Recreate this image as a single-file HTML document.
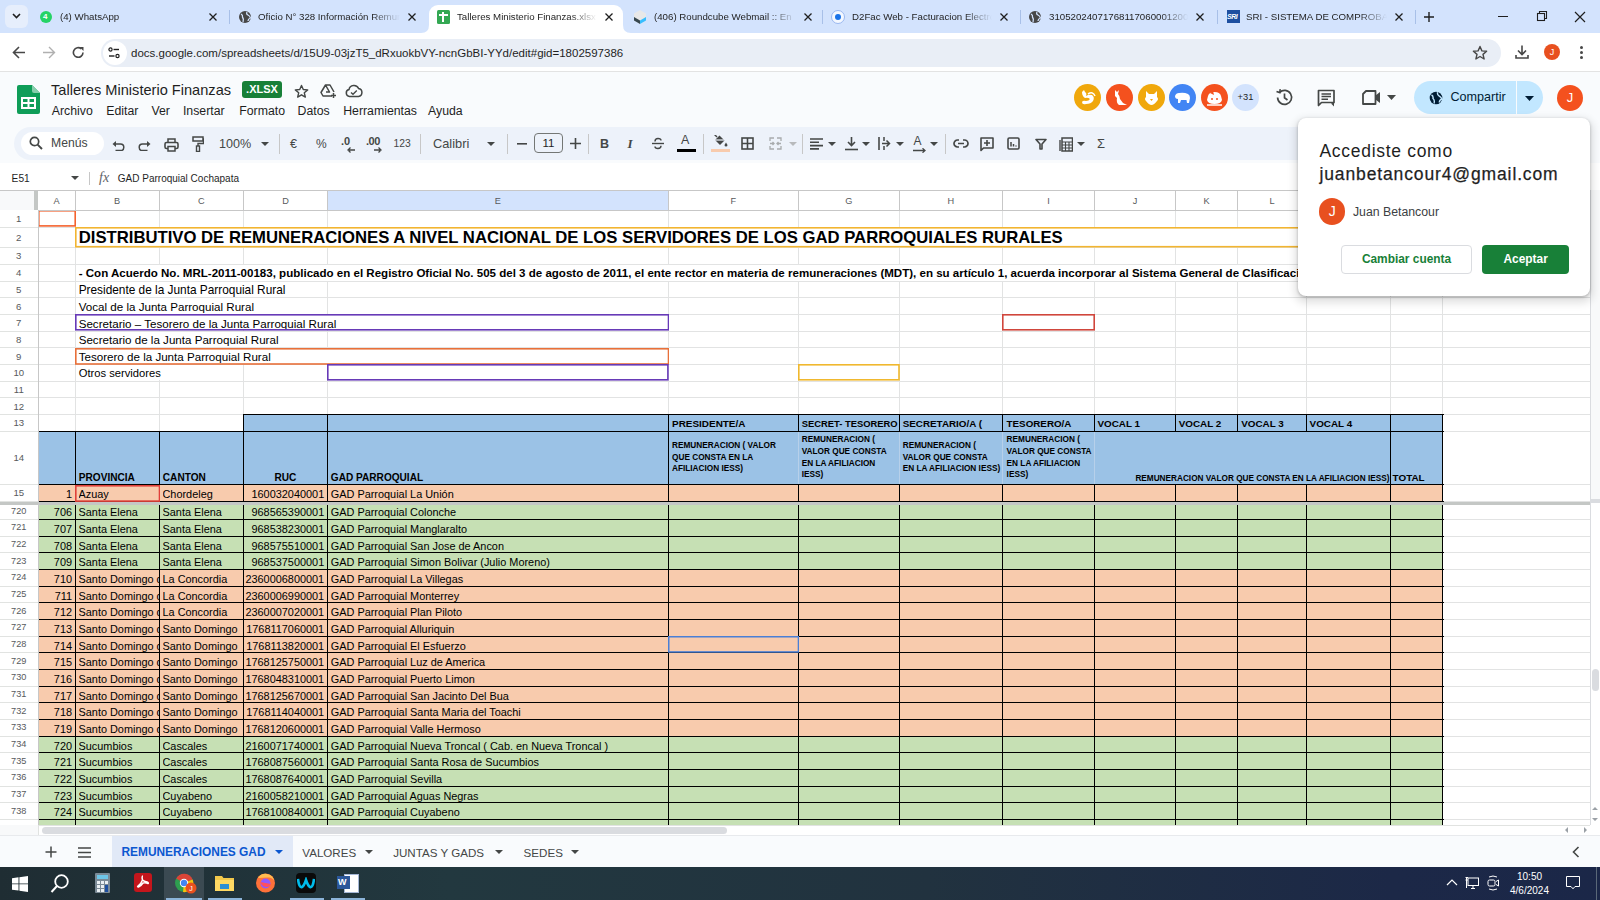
<!DOCTYPE html>
<html><head><meta charset="utf-8"><title>Talleres Ministerio Finanzas</title>
<style>html,body{margin:0;padding:0;width:1600px;height:900px;overflow:hidden;background:#fff;font-family:"Liberation Sans",sans-serif}</style>
</head><body>
<div style="position:absolute;left:0;top:0;width:1600px;height:33px;background:#d3e3fd"></div>
<div style="position:absolute;left:5px;top:5px;width:23px;height:23px;border-radius:6px;background:#e6eefc"></div>
<svg style="position:absolute;left:11px;top:12px" width="11" height="8" viewBox="0 0 11 8"><path d="M2 2 L5.5 5.5 L9 2" stroke="#1f1f1f" stroke-width="1.6" fill="none"/></svg>
<div style="position:absolute;left:429px;top:5px;width:194px;height:28px;background:#fff;border-radius:9px 9px 0 0"></div>
<svg style="position:absolute;left:421px;top:25px" width="8" height="8"><path d="M0 8 Q8 8 8 0 L8 8 Z" fill="#fff"/></svg>
<svg style="position:absolute;left:623px;top:25px" width="8" height="8"><path d="M8 8 Q0 8 0 0 L0 8 Z" fill="#fff"/></svg>
<div style="position:absolute;left:60px;top:9px;width:141px;height:16px;overflow:hidden;white-space:nowrap;font:9.7px/16px 'Liberation Sans',sans-serif;color:#1f1f1f;-webkit-mask-image:linear-gradient(90deg,#000 80%,transparent)">(4) WhatsApp</div>
<svg style="position:absolute;left:208px;top:12px" width="10" height="10" viewBox="0 0 10 10"><path d="M1.5 1.5 L8.5 8.5 M8.5 1.5 L1.5 8.5" stroke="#1f1f1f" stroke-width="1.3"/></svg>
<div style="position:absolute;left:40px;top:11px;width:12px;height:12px;border-radius:50%;background:#25d366"></div><div style="position:absolute;left:43px;top:11px;font:bold 8px/12px 'Liberation Sans';color:#fff">4</div>
<div style="position:absolute;left:258px;top:9px;width:142px;height:16px;overflow:hidden;white-space:nowrap;font:9.7px/16px 'Liberation Sans',sans-serif;color:#1f1f1f;-webkit-mask-image:linear-gradient(90deg,#000 80%,transparent)">Oficio N° 328 Información Remuneraciones</div>
<svg style="position:absolute;left:407px;top:12px" width="10" height="10" viewBox="0 0 10 10"><path d="M1.5 1.5 L8.5 8.5 M8.5 1.5 L1.5 8.5" stroke="#1f1f1f" stroke-width="1.3"/></svg>
<svg style="position:absolute;left:238px;top:10px" width="14" height="14" viewBox="0 0 14 14"><circle cx="7" cy="7" r="6" fill="#474747"/><path d="M3 4 Q5 5 4.5 7 Q6 9 5 12 M9 2 Q8 4 10 5 Q12 6 12.5 8 Q10 9 10 11" stroke="#d3e3fd" stroke-width="1.3" fill="none"/></svg>
<div style="position:absolute;left:457px;top:9px;width:140px;height:16px;overflow:hidden;white-space:nowrap;font:9.7px/16px 'Liberation Sans',sans-serif;color:#1f1f1f;-webkit-mask-image:linear-gradient(90deg,#000 80%,transparent)">Talleres Ministerio Finanzas.xlsx</div>
<svg style="position:absolute;left:604px;top:12px" width="10" height="10" viewBox="0 0 10 10"><path d="M1.5 1.5 L8.5 8.5 M8.5 1.5 L1.5 8.5" stroke="#1f1f1f" stroke-width="1.3"/></svg>
<div style="position:absolute;left:437px;top:10px;width:13px;height:14px;background:#34a853;border-radius:1.5px"></div><div style="position:absolute;left:442px;top:12px;width:2px;height:10px;background:#fff"></div><div style="position:absolute;left:439px;top:14px;width:9px;height:2px;background:#fff"></div>
<div style="position:absolute;left:654px;top:9px;width:142px;height:16px;overflow:hidden;white-space:nowrap;font:9.7px/16px 'Liberation Sans',sans-serif;color:#1f1f1f;-webkit-mask-image:linear-gradient(90deg,#000 80%,transparent)">(406) Roundcube Webmail :: En</div>
<svg style="position:absolute;left:803px;top:12px" width="10" height="10" viewBox="0 0 10 10"><path d="M1.5 1.5 L8.5 8.5 M8.5 1.5 L1.5 8.5" stroke="#1f1f1f" stroke-width="1.3"/></svg>
<svg style="position:absolute;left:633px;top:9px" width="14" height="16" viewBox="0 0 14 16"><path d="M7 1 L13 4.5 L13 11.5 L7 15 L1 11.5 L1 4.5 Z" fill="#e8e8e8"/><path d="M1 8 L7 11.5 L7 15 L1 11.5 Z" fill="#37474f"/><path d="M7 11.5 L13 8 L13 11.5 L7 15 Z" fill="#37beff"/></svg>
<div style="position:absolute;left:852px;top:9px;width:140px;height:16px;overflow:hidden;white-space:nowrap;font:9.7px/16px 'Liberation Sans',sans-serif;color:#1f1f1f;-webkit-mask-image:linear-gradient(90deg,#000 80%,transparent)">D2Fac Web - Facturacion Electronica</div>
<svg style="position:absolute;left:999px;top:12px" width="10" height="10" viewBox="0 0 10 10"><path d="M1.5 1.5 L8.5 8.5 M8.5 1.5 L1.5 8.5" stroke="#1f1f1f" stroke-width="1.3"/></svg>
<div style="position:absolute;left:831px;top:10px;width:12px;height:12px;border-radius:50%;border:1px solid #9ab8f0;background:#f4f8ff"></div><div style="position:absolute;left:835px;top:14px;width:6px;height:6px;border-radius:50%;background:#1a73e8"></div>
<div style="position:absolute;left:1049px;top:9px;width:139px;height:16px;overflow:hidden;white-space:nowrap;font:9.7px/16px 'Liberation Sans',sans-serif;color:#1f1f1f;-webkit-mask-image:linear-gradient(90deg,#000 80%,transparent)">310520240717681170600012000</div>
<svg style="position:absolute;left:1195px;top:12px" width="10" height="10" viewBox="0 0 10 10"><path d="M1.5 1.5 L8.5 8.5 M8.5 1.5 L1.5 8.5" stroke="#1f1f1f" stroke-width="1.3"/></svg>
<svg style="position:absolute;left:1028px;top:10px" width="14" height="14" viewBox="0 0 14 14"><circle cx="7" cy="7" r="6" fill="#474747"/><path d="M3 4 Q5 5 4.5 7 Q6 9 5 12 M9 2 Q8 4 10 5 Q12 6 12.5 8 Q10 9 10 11" stroke="#d3e3fd" stroke-width="1.3" fill="none"/></svg>
<div style="position:absolute;left:1246px;top:9px;width:141px;height:16px;overflow:hidden;white-space:nowrap;font:9.7px/16px 'Liberation Sans',sans-serif;color:#1f1f1f;-webkit-mask-image:linear-gradient(90deg,#000 80%,transparent)">SRI - SISTEMA DE COMPROBANTES</div>
<svg style="position:absolute;left:1394px;top:12px" width="10" height="10" viewBox="0 0 10 10"><path d="M1.5 1.5 L8.5 8.5 M8.5 1.5 L1.5 8.5" stroke="#1f1f1f" stroke-width="1.3"/></svg>
<div style="position:absolute;left:1227px;top:10px;width:13px;height:13px;background:#1d4fa0"></div><div style="position:absolute;left:1227px;top:11px;font:italic bold 7px/11px 'Liberation Sans';color:#fff;letter-spacing:-0.5px">SRI</div>
<div style="position:absolute;left:229px;top:10px;width:1px;height:14px;background:#a8c0e8"></div>
<div style="position:absolute;left:822px;top:10px;width:1px;height:14px;background:#a8c0e8"></div>
<div style="position:absolute;left:1020px;top:10px;width:1px;height:14px;background:#a8c0e8"></div>
<div style="position:absolute;left:1217px;top:10px;width:1px;height:14px;background:#a8c0e8"></div>
<div style="position:absolute;left:1415px;top:10px;width:1px;height:14px;background:#a8c0e8"></div>
<svg style="position:absolute;left:1423px;top:11px" width="12" height="12"><path d="M6 1 V11 M1 6 H11" stroke="#1f1f1f" stroke-width="1.4"/></svg>
<div style="position:absolute;left:1498px;top:16px;width:10px;height:1px;background:#1f1f1f"></div>
<svg style="position:absolute;left:1536px;top:10px" width="12" height="12"><rect x="1.5" y="3.5" width="7" height="7" fill="none" stroke="#1f1f1f" stroke-width="1.1"/><path d="M3.5 3.5 V1.5 H10.5 V8.5 H8.5" fill="none" stroke="#1f1f1f" stroke-width="1.1"/></svg>
<svg style="position:absolute;left:1574px;top:11px" width="12" height="12"><path d="M1 1 L11 11 M11 1 L1 11" stroke="#1f1f1f" stroke-width="1.2"/></svg>
<div style="position:absolute;left:0;top:33px;width:1600px;height:38px;background:#fff;border-bottom:1px solid #e3e3e3;border-radius:5px 8px 0 0"></div>
<svg style="position:absolute;left:12px;top:46px" width="14" height="13" viewBox="0 0 14 13"><path d="M13 6.5 H2 M7 1 L1.5 6.5 L7 12" stroke="#474747" stroke-width="1.6" fill="none"/></svg>
<svg style="position:absolute;left:42px;top:46px" width="14" height="13" viewBox="0 0 14 13"><path d="M1 6.5 H12 M7 1 L12.5 6.5 L7 12" stroke="#b0b0b0" stroke-width="1.4" fill="none"/></svg>
<svg style="position:absolute;left:72px;top:46px" width="13" height="13" viewBox="0 0 13 13"><path d="M11 6.5 A4.8 4.8 0 1 1 9.3 2.8" stroke="#474747" stroke-width="1.6" fill="none"/><path d="M7.5 1 H11.5 V5 Z" fill="#474747"/></svg>
<div style="position:absolute;left:101px;top:39px;width:1400px;height:28px;border-radius:14px;background:#e9eef6"></div>
<div style="position:absolute;left:103px;top:41px;width:24px;height:24px;border-radius:12px;background:#fff"></div>
<svg style="position:absolute;left:108px;top:47px" width="12" height="12" viewBox="0 0 12 12"><circle cx="2.5" cy="2.5" r="1.6" fill="none" stroke="#1f1f1f" stroke-width="1.2"/><path d="M5.5 2.5 H11" stroke="#1f1f1f" stroke-width="1.4"/><circle cx="9.5" cy="9" r="1.6" fill="none" stroke="#1f1f1f" stroke-width="1.2"/><path d="M1 9 H6.5" stroke="#1f1f1f" stroke-width="1.4"/></svg>
<div style="position:absolute;left:131px;top:44px;font:11.5px/18px 'Liberation Sans',sans-serif;color:#1f1f1f;white-space:nowrap">docs.google.com/spreadsheets/d/15U9-03jzT5_dRxuokbVY-ncnGbBI-YYd/edit#gid=1802597386</div>
<svg style="position:absolute;left:1472px;top:45px" width="16" height="16" viewBox="0 0 16 16"><path d="M8 1.5 L9.9 5.9 L14.6 6.3 L11 9.4 L12.1 14 L8 11.5 L3.9 14 L5 9.4 L1.4 6.3 L6.1 5.9 Z" fill="none" stroke="#474747" stroke-width="1.4" stroke-linejoin="round"/></svg>
<svg style="position:absolute;left:1514px;top:44px" width="16" height="16" viewBox="0 0 16 16"><path d="M8 1.5 V10 M4 6.5 L8 10.5 L12 6.5 M2 11 V14 H14 V11" stroke="#474747" stroke-width="1.6" fill="none"/></svg>
<div style="position:absolute;left:1544px;top:44px;width:16px;height:16px;border-radius:50%;background:#e8501f;color:#fff;font:9px/16px 'Liberation Sans';text-align:center">J</div>
<div style="position:absolute;left:1580px;top:46px;width:3px;height:3px;border-radius:50%;background:#474747"></div>
<div style="position:absolute;left:1580px;top:51px;width:3px;height:3px;border-radius:50%;background:#474747"></div>
<div style="position:absolute;left:1580px;top:56px;width:3px;height:3px;border-radius:50%;background:#474747"></div>
<div style="position:absolute;left:0;top:72px;width:1600px;height:91px;background:#f9fbfd"></div>
<svg style="position:absolute;left:17px;top:85px" width="23" height="29" viewBox="0 0 23 29"><path d="M2 0 H15 L23 8 V27 A2 2 0 0 1 21 29 H2 A2 2 0 0 1 0 27 V2 A2 2 0 0 1 2 0 Z" fill="#0f9d58"/><path d="M15 0 V6 A2 2 0 0 0 17 8 H23 Z" fill="#87ceac"/><rect x="5" y="13" width="13" height="10" fill="none" stroke="#fff" stroke-width="2"/><path d="M5 18 H18 M11.5 13 V23" stroke="#fff" stroke-width="2"/></svg>
<div style="position:absolute;left:51px;top:80px;font:14.6px/20px 'Liberation Sans',sans-serif;color:#1f1f1f;white-space:nowrap">Talleres Ministerio Finanzas</div>
<div style="position:absolute;left:242px;top:81px;width:40px;height:17px;border-radius:3px;background:#188038;color:#fff;font:bold 11px/17px 'Liberation Sans',sans-serif;text-align:center">.XLSX</div>
<svg style="position:absolute;left:294px;top:84px" width="15" height="15" viewBox="0 0 16 16"><path d="M8 1.5 L9.9 5.9 L14.6 6.3 L11 9.4 L12.1 14 L8 11.5 L3.9 14 L5 9.4 L1.4 6.3 L6.1 5.9 Z" fill="none" stroke="#444746" stroke-width="1.5" stroke-linejoin="round"/></svg>
<svg style="position:absolute;left:320px;top:83px" width="17" height="16" viewBox="0 0 17 16"><path d="M5.5 2 H10 L14 9 M12 13 H3 L1 9.5 L5.5 2 L9.5 9 H6" fill="none" stroke="#444746" stroke-width="1.5" stroke-linejoin="round"/><path d="M13.5 10 V15 M11 12.5 H16" stroke="#444746" stroke-width="1.5"/></svg>
<svg style="position:absolute;left:345px;top:84px" width="18" height="14" viewBox="0 0 18 14"><path d="M4.5 12.5 A3.5 3.5 0 0 1 4 5.6 A5 5 0 0 1 13.6 4.6 A4 4 0 0 1 13.5 12.5 Z" fill="none" stroke="#444746" stroke-width="1.5"/><path d="M6 8.5 L8 10.3 L11.8 6.6" fill="none" stroke="#444746" stroke-width="1.4"/></svg>
<div style="position:absolute;left:51.8px;top:103px;font:12.3px/16px 'Liberation Sans',sans-serif;color:#1f1f1f;white-space:nowrap">Archivo</div>
<div style="position:absolute;left:106.2px;top:103px;font:12.3px/16px 'Liberation Sans',sans-serif;color:#1f1f1f;white-space:nowrap">Editar</div>
<div style="position:absolute;left:151.5px;top:103px;font:12.3px/16px 'Liberation Sans',sans-serif;color:#1f1f1f;white-space:nowrap">Ver</div>
<div style="position:absolute;left:182.9px;top:103px;font:12.3px/16px 'Liberation Sans',sans-serif;color:#1f1f1f;white-space:nowrap">Insertar</div>
<div style="position:absolute;left:239.2px;top:103px;font:12.3px/16px 'Liberation Sans',sans-serif;color:#1f1f1f;white-space:nowrap">Formato</div>
<div style="position:absolute;left:297.6px;top:103px;font:12.3px/16px 'Liberation Sans',sans-serif;color:#1f1f1f;white-space:nowrap">Datos</div>
<div style="position:absolute;left:343.2px;top:103px;font:12.3px/16px 'Liberation Sans',sans-serif;color:#1f1f1f;white-space:nowrap">Herramientas</div>
<div style="position:absolute;left:428px;top:103px;font:12.3px/16px 'Liberation Sans',sans-serif;color:#1f1f1f;white-space:nowrap">Ayuda</div>
<svg style="position:absolute;left:1074.0px;top:84px" width="27" height="27" viewBox="0 0 27 27"><circle cx="13.5" cy="13.5" r="13.5" fill="#f0a80c"/><path d="M8 8 L10 6 L11 8 Q13 9 12 12 Q15 10 18 11 Q21 13 19 17 Q17 20 12 20 Q8 21 8 18 Q9 16 12 17 Q15 17 16 15 Q14 13 11 14 Q8 12 8 8 Z" fill="#fff"/><path d="M14 10 Q19 7 21 12" fill="none" stroke="#fff" stroke-width="1.5"/></svg>
<svg style="position:absolute;left:1105.5px;top:84px" width="27" height="27" viewBox="0 0 27 27"><circle cx="13.5" cy="13.5" r="13.5" fill="#f4511e"/><path d="M9 6 L11 8 L13 6 L12 10 Q14 12 14 15 L17 19 L21 21 L13 21 Q10 19 11 14 L9 12 Z" fill="#fff"/></svg>
<svg style="position:absolute;left:1137.5px;top:84px" width="27" height="27" viewBox="0 0 27 27"><circle cx="13.5" cy="13.5" r="13.5" fill="#f0a80c"/><path d="M8 7 L11 10 H16 L19 7 L19 13 Q21 15 19 17 Q16 21 13.5 21 Q11 21 8 17 Q6 15 8 13 Z" fill="#fff"/><path d="M12 15 L13.5 17 L15 15 Z" fill="#f0a80c"/></svg>
<svg style="position:absolute;left:1168.8px;top:84px" width="27" height="27" viewBox="0 0 27 27"><circle cx="13.5" cy="13.5" r="13.5" fill="#4285f4"/><path d="M6 12 Q7 9 10 9 Q15 8 19 10 Q21 11 21 14 L20 19 L18 19 L17.5 16 L12 16 L11 19 L9 19 L9 15 Q6 15 6 12 Z" fill="#fff"/></svg>
<svg style="position:absolute;left:1200.8px;top:84px" width="27" height="27" viewBox="0 0 27 27"><circle cx="13.5" cy="13.5" r="13.5" fill="#f4511e"/><path d="M7 12 Q8 8 13.5 8 Q19 8 20 12 L21 16 Q20 20 13.5 20 Q7 20 6 16 Z" fill="#fff"/><path d="M9 9 L12 7 L13 11 Z" fill="#f4511e"/><circle cx="11" cy="15" r="1" fill="#f4511e"/><circle cx="16" cy="15" r="1" fill="#f4511e"/><path d="M6 21 H21" stroke="#fff" stroke-width="1.5"/></svg>
<div style="position:absolute;left:1232px;top:84px;width:27px;height:27px;border-radius:50%;background:#d3e3fd;color:#1f1f1f;font:9.3px/27px 'Liberation Sans',sans-serif;text-align:center">+31</div>
<svg style="position:absolute;left:1275px;top:88px" width="19" height="19" viewBox="0 0 19 19"><path d="M2.6 9.5 A7 7 0 1 0 4.6 4.5" fill="none" stroke="#444746" stroke-width="1.7"/><path d="M1.5 3.5 L4.8 4.6 L5.2 1.2" fill="none" stroke="#444746" stroke-width="1.6"/><path d="M9.5 5.5 V9.8 L12.5 12" fill="none" stroke="#444746" stroke-width="1.7"/></svg>
<svg style="position:absolute;left:1317px;top:89px" width="19" height="19" viewBox="0 0 19 19"><path d="M1.5 1.5 H17 V13.5 H4.5 L1.5 16.5 Z" fill="none" stroke="#444746" stroke-width="1.7" stroke-linejoin="round"/><path d="M4.5 5 H14 M4.5 7.6 H14 M4.5 10.2 H11" stroke="#444746" stroke-width="1.5"/><path d="M17 13.5 V17.5 L14 14.5" fill="#444746"/></svg>
<svg style="position:absolute;left:1362px;top:90px" width="20" height="15" viewBox="0 0 20 15"><path d="M4 1 H13.5 V14 H1 V4 Z" fill="none" stroke="#444746" stroke-width="1.8" stroke-linejoin="round"/><path d="M13.5 5.5 L18 2 V13 L13.5 9.5 Z" fill="#444746"/></svg>
<svg style="position:absolute;left:1387px;top:95px" width="9" height="5"><path d="M0 0 H9 L4.5 5 Z" fill="#444746"/></svg>
<div style="position:absolute;left:1414px;top:81px;width:129px;height:33px;border-radius:17px;background:#c2e7ff"></div>
<div style="position:absolute;left:1515.5px;top:81px;width:1px;height:33px;background:#f9fbfd"></div>
<svg style="position:absolute;left:1429px;top:91px" width="14" height="14" viewBox="0 0 14 14"><circle cx="7" cy="7" r="6.3" fill="#001d35"/><path d="M2.5 4 Q4.5 5 4 7.5 Q6 9 5 12.5 M8.6 1.2 Q8 3.5 10 4.8 Q12 6 13 8 Q10.5 8.6 10.3 11.5" stroke="#c2e7ff" stroke-width="1.4" fill="none"/></svg>
<div style="position:absolute;left:1450.5px;top:89px;font:12.6px/17px 'Liberation Sans',sans-serif;color:#001d35;white-space:nowrap">Compartir</div>
<svg style="position:absolute;left:1525px;top:95.5px" width="9" height="5"><path d="M0 0 H9 L4.5 5 Z" fill="#001d35"/></svg>
<div style="position:absolute;left:1557px;top:85px;width:26px;height:26px;border-radius:50%;background:#f4511e;color:#fff;font:13px/26px 'Liberation Sans',sans-serif;text-align:center">J</div>
<div style="position:absolute;left:14px;top:127px;width:1576px;height:33px;border-radius:17px;background:#edf2fa"></div>
<div style="position:absolute;left:21px;top:131.5px;width:83px;height:23.5px;border-radius:12px;background:#fff"></div>
<svg style="position:absolute;left:28.6px;top:136.0px" width="14" height="14" viewBox="0 0 14 14"><circle cx="5.5" cy="5.5" r="4.2" fill="none" stroke="#444746" stroke-width="1.7"/><path d="M8.6 8.6 L13 13" stroke="#444746" stroke-width="1.9"/></svg>
<div style="position:absolute;left:51px;top:135px;font:12.2px/16px 'Liberation Sans',sans-serif;color:#444746;white-space:nowrap">Menús</div>
<svg style="position:absolute;left:112.0px;top:139.5px" width="13" height="11" viewBox="0 0 13 11"><path d="M3 4 H8.5 A3.3 3.3 0 0 1 8.5 10.6 H3.5" fill="none" stroke="#444746" stroke-width="1.5"/><path d="M0.5 4 L4 1 V7 Z" fill="#444746"/></svg>
<svg style="position:absolute;left:138.0px;top:139.5px" width="13" height="11" viewBox="0 0 13 11"><path d="M10 4 H4.5 A3.3 3.3 0 0 0 4.5 10.6 H9.5" fill="none" stroke="#444746" stroke-width="1.5"/><path d="M12.5 4 L9 1 V7 Z" fill="#444746"/></svg>
<svg style="position:absolute;left:164.0px;top:137.5px" width="15" height="14" viewBox="0 0 15 14"><path d="M4 4 V1 H11 V4" fill="none" stroke="#444746" stroke-width="1.5"/><rect x="1" y="4.5" width="13" height="6" rx="1.5" fill="none" stroke="#444746" stroke-width="1.6"/><rect x="4" y="8.5" width="7" height="4.5" fill="#edf2fa" stroke="#444746" stroke-width="1.5"/></svg>
<svg style="position:absolute;left:191.5px;top:136.0px" width="12" height="16" viewBox="0 0 12 16"><rect x="1" y="1" width="10" height="4" fill="none" stroke="#444746" stroke-width="1.5"/><path d="M11 3 H11.5 V7.5 H6 V10" fill="none" stroke="#444746" stroke-width="1.4"/><rect x="4.5" y="10" width="3" height="5.5" fill="none" stroke="#444746" stroke-width="1.4"/></svg>
<div style="position:absolute;left:219px;top:136px;font:12.6px/16px 'Liberation Sans',sans-serif;color:#444746">100%</div>
<svg style="position:absolute;left:260.5px;top:142.0px" width="8" height="4" viewBox="0 0 8 4"><path d="M0 0 H8 L4 4 Z" fill="#444746"/></svg>
<div style="position:absolute;left:278.7px;top:134px;width:1px;height:20px;background:#c7c7c7"></div>
<div style="position:absolute;left:419.5px;top:134px;width:1px;height:20px;background:#c7c7c7"></div>
<div style="position:absolute;left:507.4px;top:134px;width:1px;height:20px;background:#c7c7c7"></div>
<div style="position:absolute;left:588.4px;top:134px;width:1px;height:20px;background:#c7c7c7"></div>
<div style="position:absolute;left:702.7px;top:134px;width:1px;height:20px;background:#c7c7c7"></div>
<div style="position:absolute;left:802px;top:134px;width:1px;height:20px;background:#c7c7c7"></div>
<div style="position:absolute;left:944.8px;top:134px;width:1px;height:20px;background:#c7c7c7"></div>
<div style="position:absolute;left:290px;top:136px;font:12.5px/16px 'Liberation Sans',sans-serif;color:#444746">€</div>
<div style="position:absolute;left:316px;top:136px;font:12px/16px 'Liberation Sans',sans-serif;color:#444746">%</div>
<div style="position:absolute;left:341px;top:134px;font:bold 11px/14px 'Liberation Sans',sans-serif;color:#444746">.0</div>
<svg style="position:absolute;left:347.0px;top:146.5px" width="8" height="6" viewBox="0 0 8 6"><path d="M8 3 H2 M3.5 0.5 L1 3 L3.5 5.5" stroke="#444746" stroke-width="1.3" fill="none"/></svg>
<div style="position:absolute;left:366px;top:134px;font:bold 11px/14px 'Liberation Sans',sans-serif;color:#444746;letter-spacing:-0.5px">.00</div>
<svg style="position:absolute;left:374.0px;top:146.5px" width="8" height="6" viewBox="0 0 8 6"><path d="M0 3 H6 M4.5 0.5 L7 3 L4.5 5.5" stroke="#444746" stroke-width="1.3" fill="none"/></svg>
<div style="position:absolute;left:393.5px;top:137px;font:10.3px/14px 'Liberation Sans',sans-serif;color:#444746">123</div>
<div style="position:absolute;left:433px;top:135.5px;font:12.8px/16px 'Liberation Sans',sans-serif;color:#444746">Calibri</div>
<svg style="position:absolute;left:487.4px;top:142.0px" width="8" height="4" viewBox="0 0 8 4"><path d="M0 0 H8 L4 4 Z" fill="#444746"/></svg>
<svg style="position:absolute;left:516.6px;top:142.5px" width="10" height="2" viewBox="0 0 10 2"><rect width="10" height="1.6" fill="#444746"/></svg>
<div style="position:absolute;left:534.3px;top:133.3px;width:28.5px;height:19.7px;box-sizing:border-box;border:1px solid #747775;border-radius:4px"></div>
<div style="position:absolute;left:534.3px;top:136px;width:28.5px;text-align:center;font:11.5px/15px 'Liberation Sans',sans-serif;color:#1f1f1f">11</div>
<svg style="position:absolute;left:569.8px;top:138.0px" width="11" height="11" viewBox="0 0 11 11"><path d="M5.5 0 V11 M0 5.5 H11" stroke="#444746" stroke-width="1.6"/></svg>
<div style="position:absolute;left:600px;top:136px;font:bold 12.5px/16px 'Liberation Sans',sans-serif;color:#444746">B</div>
<div style="position:absolute;left:627.5px;top:136px;font:italic bold 13px/16px 'Liberation Serif',serif;color:#444746">I</div>
<svg style="position:absolute;left:651.3px;top:137.0px" width="14" height="13" viewBox="0 0 14 13"><path d="M1 6.5 H13" stroke="#444746" stroke-width="1.4"/><path d="M4 4.5 Q4 1.5 7 1.5 Q10 1.5 10 3.5 M10 8.8 Q10 11.5 7 11.5 Q4 11.5 4 9.5" stroke="#444746" stroke-width="1.4" fill="none"/></svg>
<div style="position:absolute;left:681px;top:133px;font:12.5px/14px 'Liberation Sans',sans-serif;color:#444746">A</div>
<div style="position:absolute;left:677px;top:148.5px;width:19px;height:3px;background:#000"></div>
<svg style="position:absolute;left:712.0px;top:134.5px" width="16" height="13" viewBox="0 0 16 13"><path d="M3 5 L7.5 0.5 L12.5 5.5 L8 10 Z" fill="#444746"/><path d="M3 5 H12.5" stroke="#edf2fa" stroke-width="1.2"/><path d="M5 2 L2.5 -0.5" stroke="#444746" stroke-width="1.4"/><path d="M14 7.5 L15.5 10 A1.5 1.5 0 0 1 12.5 10 Z" fill="#444746"/></svg>
<div style="position:absolute;left:711px;top:148.5px;width:19px;height:3px;background:#f8cbad"></div>
<svg style="position:absolute;left:741.2px;top:137.0px" width="13" height="13" viewBox="0 0 13 13"><rect x="1" y="1" width="11" height="11" fill="none" stroke="#444746" stroke-width="1.6"/><path d="M6.5 1 V12 M1 6.5 H12" stroke="#444746" stroke-width="1.6"/></svg>
<svg style="position:absolute;left:768.9px;top:137.0px" width="13" height="13" viewBox="0 0 13 13"><path d="M1 4 V1 H5 M8 1 H12 V4 M12 9 V12 H8 M5 12 H1 V9 M1 6.5 H4.5 M8.5 6.5 H12 M3.5 5 L5 6.5 L3.5 8 M9.5 5 L8 6.5 L9.5 8" fill="none" stroke="#a8abad" stroke-width="1.3"/></svg>
<svg style="position:absolute;left:789.0px;top:142.0px" width="8" height="4" viewBox="0 0 8 4"><path d="M0 0 H8 L4 4 Z" fill="#b8babc"/></svg>
<svg style="position:absolute;left:810.3px;top:137.5px" width="13" height="12" viewBox="0 0 13 12"><path d="M0 1 H13 M0 4.3 H9 M0 7.6 H13 M0 10.9 H9" stroke="#444746" stroke-width="1.6"/></svg>
<svg style="position:absolute;left:827.8px;top:142.0px" width="8" height="4" viewBox="0 0 8 4"><path d="M0 0 H8 L4 4 Z" fill="#444746"/></svg>
<svg style="position:absolute;left:844.5px;top:136.5px" width="13" height="14" viewBox="0 0 13 14"><path d="M6.5 0 V8 M3 5 L6.5 8.5 L10 5" fill="none" stroke="#444746" stroke-width="1.6"/><path d="M0 12.5 H13" stroke="#444746" stroke-width="1.6"/></svg>
<svg style="position:absolute;left:862.0px;top:142.0px" width="8" height="4" viewBox="0 0 8 4"><path d="M0 0 H8 L4 4 Z" fill="#444746"/></svg>
<svg style="position:absolute;left:878.1px;top:137.0px" width="13" height="13" viewBox="0 0 13 13"><path d="M1 0 V13" stroke="#444746" stroke-width="1.6"/><path d="M4 6.5 H11 M8.5 3.5 L11.5 6.5 L8.5 9.5 M6 0 V4 M6 9 V13" fill="none" stroke="#444746" stroke-width="1.5"/></svg>
<svg style="position:absolute;left:895.7px;top:142.0px" width="8" height="4" viewBox="0 0 8 4"><path d="M0 0 H8 L4 4 Z" fill="#444746"/></svg>
<div style="position:absolute;left:913.5px;top:134px;font:12px/14px 'Liberation Sans',sans-serif;color:#444746">A</div>
<svg style="position:absolute;left:913.0px;top:148.0px" width="14" height="5" viewBox="0 0 14 5"><path d="M0 2.5 H12 M9.5 0.3 L12 2.5 L9.5 4.7" fill="none" stroke="#444746" stroke-width="1.3"/></svg>
<svg style="position:absolute;left:930.3px;top:142.0px" width="8" height="4" viewBox="0 0 8 4"><path d="M0 0 H8 L4 4 Z" fill="#444746"/></svg>
<svg style="position:absolute;left:952.5px;top:139.0px" width="16" height="9" viewBox="0 0 16 9"><path d="M6 1 H4.5 A3.5 3.5 0 0 0 4.5 8 H6 M10 1 H11.5 A3.5 3.5 0 0 1 11.5 8 H10 M5 4.5 H11" fill="none" stroke="#444746" stroke-width="1.7"/></svg>
<svg style="position:absolute;left:980.4px;top:136.5px" width="14" height="15" viewBox="0 0 14 15"><path d="M1 1 H13 V11 H3.5 L1 13.5 Z" fill="none" stroke="#444746" stroke-width="1.6" stroke-linejoin="round"/><path d="M7 3 V9 M4 6 H10" stroke="#444746" stroke-width="1.6"/></svg>
<svg style="position:absolute;left:1007.1px;top:137.0px" width="13" height="13" viewBox="0 0 13 13"><rect x="1" y="1" width="11" height="11" rx="1.2" fill="none" stroke="#444746" stroke-width="1.6"/><path d="M4 5 V9.5 M6.5 7 V9.5 M9 8.5 V9.5" stroke="#444746" stroke-width="1.5"/></svg>
<svg style="position:absolute;left:1034.6px;top:137.5px" width="12" height="12" viewBox="0 0 12 12"><path d="M1 1.5 H11 L7 6 V11 H5 V6 Z" fill="none" stroke="#444746" stroke-width="1.6" stroke-linejoin="round"/></svg>
<svg style="position:absolute;left:1058.9px;top:136.5px" width="14" height="15" viewBox="0 0 14 15"><path d="M1 3 V14" stroke="#444746" stroke-width="1.4"/><rect x="3" y="1" width="10.5" height="13" fill="none" stroke="#444746" stroke-width="1.5"/><path d="M3 5 H13.5 M3 8 H13.5 M3 11 H13.5 M6.5 5 V14 M10 5 V14" stroke="#444746" stroke-width="1.1"/></svg>
<svg style="position:absolute;left:1076.7px;top:142.0px" width="8" height="4" viewBox="0 0 8 4"><path d="M0 0 H8 L4 4 Z" fill="#444746"/></svg>
<div style="position:absolute;left:1097px;top:135.5px;font:13px/16px 'Liberation Sans',sans-serif;color:#444746">Σ</div>
<div style="position:absolute;left:0;top:163px;width:1600px;height:27px;background:#fff"></div>
<div style="position:absolute;left:11.6px;top:171px;font:10.2px/15px 'Liberation Sans',sans-serif;color:#1f1f1f">E51</div>
<svg style="position:absolute;left:71.0px;top:175.5px" width="8" height="4" viewBox="0 0 8 4"><path d="M0 0 H8 L4 4 Z" fill="#444746"/></svg>
<div style="position:absolute;left:88.5px;top:172px;width:1px;height:13px;background:#c7c7c7"></div>
<div style="position:absolute;left:99px;top:170px;font:italic 14px/16px 'Liberation Serif',serif;color:#5f6368">fx</div>
<div style="position:absolute;left:117.8px;top:171px;font:10px/15px 'Liberation Sans',sans-serif;color:#1f1f1f">GAD Parroquial Cochapata</div>
<div style="position:absolute;left:0.00px;top:190.30px;width:1600.00px;height:634.40px;background:#fff"></div>
<div style="position:absolute;left:75px;top:210px;width:1px;height:615px;background:#e2e3e3"></div>
<div style="position:absolute;left:159px;top:210px;width:1px;height:615px;background:#e2e3e3"></div>
<div style="position:absolute;left:243px;top:210px;width:1px;height:615px;background:#e2e3e3"></div>
<div style="position:absolute;left:327px;top:210px;width:1px;height:615px;background:#e2e3e3"></div>
<div style="position:absolute;left:668px;top:210px;width:1px;height:615px;background:#e2e3e3"></div>
<div style="position:absolute;left:798px;top:210px;width:1px;height:615px;background:#e2e3e3"></div>
<div style="position:absolute;left:899px;top:210px;width:1px;height:615px;background:#e2e3e3"></div>
<div style="position:absolute;left:1002px;top:210px;width:1px;height:615px;background:#e2e3e3"></div>
<div style="position:absolute;left:1094px;top:210px;width:1px;height:615px;background:#e2e3e3"></div>
<div style="position:absolute;left:1175px;top:210px;width:1px;height:615px;background:#e2e3e3"></div>
<div style="position:absolute;left:1237px;top:210px;width:1px;height:615px;background:#e2e3e3"></div>
<div style="position:absolute;left:1306px;top:210px;width:1px;height:615px;background:#e2e3e3"></div>
<div style="position:absolute;left:1390px;top:210px;width:1px;height:615px;background:#e2e3e3"></div>
<div style="position:absolute;left:1442px;top:210px;width:1px;height:615px;background:#e2e3e3"></div>
<div style="position:absolute;left:1590px;top:210px;width:1px;height:615px;background:#e2e3e3"></div>
<div style="position:absolute;left:38px;top:227px;width:1552px;height:1px;background:#e2e3e3"></div>
<div style="position:absolute;left:38px;top:247px;width:1552px;height:1px;background:#e2e3e3"></div>
<div style="position:absolute;left:38px;top:264px;width:1552px;height:1px;background:#e2e3e3"></div>
<div style="position:absolute;left:38px;top:281px;width:1552px;height:1px;background:#e2e3e3"></div>
<div style="position:absolute;left:38px;top:297px;width:1552px;height:1px;background:#e2e3e3"></div>
<div style="position:absolute;left:38px;top:314px;width:1552px;height:1px;background:#e2e3e3"></div>
<div style="position:absolute;left:38px;top:331px;width:1552px;height:1px;background:#e2e3e3"></div>
<div style="position:absolute;left:38px;top:347px;width:1552px;height:1px;background:#e2e3e3"></div>
<div style="position:absolute;left:38px;top:364px;width:1552px;height:1px;background:#e2e3e3"></div>
<div style="position:absolute;left:38px;top:381px;width:1552px;height:1px;background:#e2e3e3"></div>
<div style="position:absolute;left:38px;top:397px;width:1552px;height:1px;background:#e2e3e3"></div>
<div style="position:absolute;left:38px;top:414px;width:1552px;height:1px;background:#e2e3e3"></div>
<div style="position:absolute;left:38px;top:431px;width:1552px;height:1px;background:#e2e3e3"></div>
<div style="position:absolute;left:38px;top:484px;width:1552px;height:1px;background:#e2e3e3"></div>
<div style="position:absolute;left:38px;top:501px;width:1552px;height:1px;background:#e2e3e3"></div>
<div style="position:absolute;left:38px;top:519px;width:1552px;height:1px;background:#e2e3e3"></div>
<div style="position:absolute;left:38px;top:536px;width:1552px;height:1px;background:#e2e3e3"></div>
<div style="position:absolute;left:38px;top:552px;width:1552px;height:1px;background:#e2e3e3"></div>
<div style="position:absolute;left:38px;top:569px;width:1552px;height:1px;background:#e2e3e3"></div>
<div style="position:absolute;left:38px;top:586px;width:1552px;height:1px;background:#e2e3e3"></div>
<div style="position:absolute;left:38px;top:602px;width:1552px;height:1px;background:#e2e3e3"></div>
<div style="position:absolute;left:38px;top:619px;width:1552px;height:1px;background:#e2e3e3"></div>
<div style="position:absolute;left:38px;top:636px;width:1552px;height:1px;background:#e2e3e3"></div>
<div style="position:absolute;left:38px;top:652px;width:1552px;height:1px;background:#e2e3e3"></div>
<div style="position:absolute;left:38px;top:669px;width:1552px;height:1px;background:#e2e3e3"></div>
<div style="position:absolute;left:38px;top:686px;width:1552px;height:1px;background:#e2e3e3"></div>
<div style="position:absolute;left:38px;top:702px;width:1552px;height:1px;background:#e2e3e3"></div>
<div style="position:absolute;left:38px;top:719px;width:1552px;height:1px;background:#e2e3e3"></div>
<div style="position:absolute;left:38px;top:736px;width:1552px;height:1px;background:#e2e3e3"></div>
<div style="position:absolute;left:38px;top:752px;width:1552px;height:1px;background:#e2e3e3"></div>
<div style="position:absolute;left:38px;top:769px;width:1552px;height:1px;background:#e2e3e3"></div>
<div style="position:absolute;left:38px;top:786px;width:1552px;height:1px;background:#e2e3e3"></div>
<div style="position:absolute;left:38px;top:802px;width:1552px;height:1px;background:#e2e3e3"></div>
<div style="position:absolute;left:38px;top:819px;width:1552px;height:1px;background:#e2e3e3"></div>
<div style="position:absolute;left:38px;top:836px;width:1552px;height:1px;background:#e2e3e3"></div>
<div style="position:absolute;left:75.60px;top:227.60px;width:1513.80px;height:19.30px;background:#fff"></div>
<div style="position:absolute;left:75.60px;top:265.00px;width:1513.80px;height:15.80px;background:#fff"></div>
<div style="position:absolute;left:75.60px;top:282.00px;width:251.40px;height:15.20px;background:#fff"></div>
<div style="position:absolute;left:75.60px;top:298.40px;width:251.40px;height:15.40px;background:#fff"></div>
<div style="position:absolute;left:75.60px;top:315.00px;width:592.10px;height:15.40px;background:#fff"></div>
<div style="position:absolute;left:75.60px;top:331.60px;width:251.40px;height:15.40px;background:#fff"></div>
<div style="position:absolute;left:75.60px;top:348.20px;width:592.10px;height:15.60px;background:#fff"></div>
<div style="position:absolute;left:75.60px;top:365.00px;width:167.20px;height:15.40px;background:#fff"></div>
<div style="position:absolute;left:78.70px;top:227.50px;white-space:nowrap;font:bold 16.7px/20px 'Liberation Sans',sans-serif;color:#000">DISTRIBUTIVO DE REMUNERACIONES A NIVEL NACIONAL DE LOS SERVIDORES DE LOS GAD PARROQUIALES RURALES</div>
<div style="position:absolute;left:78.70px;top:265.90px;white-space:nowrap;font:bold 11.56px/15px 'Liberation Sans',sans-serif;color:#000">- Con Acuerdo No. MRL-2011-00183, publicado en el Registro Oficial No. 505 del 3 de agosto de 2011, el ente rector en materia de remuneraciones (MDT), en su artículo 1, acuerda incorporar al Sistema General de Clasificación de Puestos</div>
<div style="position:absolute;left:78.70px;top:282.60px;white-space:nowrap;font:11.85px/15px 'Liberation Sans',sans-serif;color:#000">Presidente de la Junta Parroquial Rural</div>
<div style="position:absolute;left:78.70px;top:299.00px;white-space:nowrap;font:11.6px/15px 'Liberation Sans',sans-serif;color:#000">Vocal de la Junta Parroquial Rural</div>
<div style="position:absolute;left:78.70px;top:315.60px;white-space:nowrap;font:11.6px/15px 'Liberation Sans',sans-serif;color:#000">Secretario – Tesorero de la Junta Parroquial Rural</div>
<div style="position:absolute;left:78.70px;top:332.20px;white-space:nowrap;font:11.6px/15px 'Liberation Sans',sans-serif;color:#000">Secretario de la Junta Parroquial Rural</div>
<div style="position:absolute;left:78.70px;top:348.80px;white-space:nowrap;font:11.6px/15px 'Liberation Sans',sans-serif;color:#000">Tesorero de la Junta Parroquial Rural</div>
<div style="position:absolute;left:78.70px;top:365.60px;white-space:nowrap;font:11.2px/15px 'Liberation Sans',sans-serif;color:#000">Otros servidores</div>
<div style="position:absolute;left:243.40px;top:414.40px;width:1199.20px;height:17.00px;background:#9bc2e6"></div>
<div style="position:absolute;left:38.00px;top:431.40px;width:1404.60px;height:53.10px;background:#9bc2e6"></div>
<div style="position:absolute;left:798px;top:431px;width:1px;height:53px;background:#b7d0ea"></div>
<div style="position:absolute;left:899px;top:431px;width:1px;height:53px;background:#b7d0ea"></div>
<div style="position:absolute;left:1002px;top:431px;width:1px;height:53px;background:#b7d0ea"></div>
<div style="position:absolute;left:1094px;top:431px;width:1px;height:53px;background:#b7d0ea"></div>
<div style="position:absolute;left:243px;top:414px;width:1201px;height:1px;background:#000"></div>
<div style="position:absolute;left:38px;top:431px;width:1406px;height:1px;background:#000"></div>
<div style="position:absolute;left:243px;top:414px;width:1px;height:17px;background:#000"></div>
<div style="position:absolute;left:327px;top:414px;width:1px;height:17px;background:#000"></div>
<div style="position:absolute;left:668px;top:414px;width:1px;height:17px;background:#000"></div>
<div style="position:absolute;left:798px;top:414px;width:1px;height:17px;background:#000"></div>
<div style="position:absolute;left:899px;top:414px;width:1px;height:17px;background:#000"></div>
<div style="position:absolute;left:1002px;top:414px;width:1px;height:17px;background:#000"></div>
<div style="position:absolute;left:1094px;top:414px;width:1px;height:17px;background:#000"></div>
<div style="position:absolute;left:1175px;top:414px;width:1px;height:17px;background:#000"></div>
<div style="position:absolute;left:1237px;top:414px;width:1px;height:17px;background:#000"></div>
<div style="position:absolute;left:1306px;top:414px;width:1px;height:17px;background:#000"></div>
<div style="position:absolute;left:1390px;top:414px;width:1px;height:17px;background:#000"></div>
<div style="position:absolute;left:1442px;top:414px;width:1px;height:17px;background:#000"></div>
<div style="position:absolute;left:75px;top:431px;width:1px;height:53px;background:#000"></div>
<div style="position:absolute;left:159px;top:431px;width:1px;height:53px;background:#000"></div>
<div style="position:absolute;left:243px;top:431px;width:1px;height:53px;background:#000"></div>
<div style="position:absolute;left:327px;top:431px;width:1px;height:53px;background:#000"></div>
<div style="position:absolute;left:668px;top:431px;width:1px;height:53px;background:#000"></div>
<div style="position:absolute;left:1390px;top:431px;width:1px;height:53px;background:#000"></div>
<div style="position:absolute;left:1442px;top:431px;width:1px;height:53px;background:#000"></div>
<div style="position:absolute;left:78.80px;top:467.75px;white-space:nowrap;font:bold 10.1px/20px 'Liberation Sans',sans-serif;color:#000;">PROVINCIA</div>
<div style="position:absolute;left:162.80px;top:467.75px;white-space:nowrap;font:bold 10.1px/20px 'Liberation Sans',sans-serif;color:#000;">CANTON</div>
<div style="position:absolute;left:243.40px;top:467.75px;width:84.00px;white-space:nowrap;font:bold 10.1px/20px 'Liberation Sans',sans-serif;color:#000;text-align:center">RUC</div>
<div style="position:absolute;left:330.80px;top:467.75px;white-space:nowrap;font:bold 10.1px/20px 'Liberation Sans',sans-serif;color:#000;">GAD PARROQUIAL</div>
<div style="position:absolute;left:1392.60px;top:467.57px;white-space:nowrap;font:bold 9.9px/20px 'Liberation Sans',sans-serif;color:#000;">TOTAL</div>
<div style="position:absolute;left:672.00px;top:413.85px;white-space:nowrap;font:bold 9.95px/20px 'Liberation Sans',sans-serif;color:#000;">PRESIDENTE/A</div>
<div style="position:absolute;left:801.70px;top:414.05px;white-space:nowrap;font:bold 9.38px/20px 'Liberation Sans',sans-serif;color:#000;">SECRET- TESORERO</div>
<div style="position:absolute;left:902.70px;top:413.88px;white-space:nowrap;font:bold 9.86px/20px 'Liberation Sans',sans-serif;color:#000;">SECRETARIO/A (</div>
<div style="position:absolute;left:1006.60px;top:413.90px;white-space:nowrap;font:bold 9.8px/20px 'Liberation Sans',sans-serif;color:#000;">TESORERO/A</div>
<div style="position:absolute;left:1097.40px;top:413.88px;white-space:nowrap;font:bold 9.87px/20px 'Liberation Sans',sans-serif;color:#000;">VOCAL 1</div>
<div style="position:absolute;left:1178.70px;top:413.88px;white-space:nowrap;font:bold 9.87px/20px 'Liberation Sans',sans-serif;color:#000;">VOCAL 2</div>
<div style="position:absolute;left:1241.20px;top:413.88px;white-space:nowrap;font:bold 9.87px/20px 'Liberation Sans',sans-serif;color:#000;">VOCAL 3</div>
<div style="position:absolute;left:1309.60px;top:413.88px;white-space:nowrap;font:bold 9.87px/20px 'Liberation Sans',sans-serif;color:#000;">VOCAL 4</div>
<div style="position:absolute;left:672.00px;top:435.84px;white-space:nowrap;font:bold 8.25px/20px 'Liberation Sans',sans-serif;color:#000;">REMUNERACION ( VALOR</div>
<div style="position:absolute;left:672.00px;top:447.59px;white-space:nowrap;font:bold 8.25px/20px 'Liberation Sans',sans-serif;color:#000;">QUE CONSTA EN LA</div>
<div style="position:absolute;left:672.00px;top:459.34px;white-space:nowrap;font:bold 8.25px/20px 'Liberation Sans',sans-serif;color:#000;">AFILIACION IESS)</div>
<div style="position:absolute;left:801.70px;top:430.14px;white-space:nowrap;font:bold 8.25px/20px 'Liberation Sans',sans-serif;color:#000;">REMUNERACION (</div>
<div style="position:absolute;left:801.70px;top:441.89px;white-space:nowrap;font:bold 8.25px/20px 'Liberation Sans',sans-serif;color:#000;">VALOR QUE CONSTA</div>
<div style="position:absolute;left:801.70px;top:453.64px;white-space:nowrap;font:bold 8.25px/20px 'Liberation Sans',sans-serif;color:#000;">EN LA AFILIACION</div>
<div style="position:absolute;left:801.70px;top:465.39px;white-space:nowrap;font:bold 8.25px/20px 'Liberation Sans',sans-serif;color:#000;">IESS)</div>
<div style="position:absolute;left:902.70px;top:435.84px;white-space:nowrap;font:bold 8.25px/20px 'Liberation Sans',sans-serif;color:#000;">REMUNERACION (</div>
<div style="position:absolute;left:902.70px;top:447.59px;white-space:nowrap;font:bold 8.25px/20px 'Liberation Sans',sans-serif;color:#000;">VALOR QUE CONSTA</div>
<div style="position:absolute;left:902.70px;top:459.34px;white-space:nowrap;font:bold 8.25px/20px 'Liberation Sans',sans-serif;color:#000;">EN LA AFILIACION IESS)</div>
<div style="position:absolute;left:1006.60px;top:430.14px;white-space:nowrap;font:bold 8.25px/20px 'Liberation Sans',sans-serif;color:#000;">REMUNERACION (</div>
<div style="position:absolute;left:1006.60px;top:441.89px;white-space:nowrap;font:bold 8.25px/20px 'Liberation Sans',sans-serif;color:#000;">VALOR QUE CONSTA</div>
<div style="position:absolute;left:1006.60px;top:453.64px;white-space:nowrap;font:bold 8.25px/20px 'Liberation Sans',sans-serif;color:#000;">EN LA AFILIACION</div>
<div style="position:absolute;left:1006.60px;top:465.39px;white-space:nowrap;font:bold 8.25px/20px 'Liberation Sans',sans-serif;color:#000;">IESS)</div>
<div style="position:absolute;left:1094.50px;top:468.65px;width:335.90px;white-space:nowrap;font:bold 8.22px/20px 'Liberation Sans',sans-serif;color:#000;text-align:center">REMUNERACION VALOR QUE CONSTA EN LA AFILIACION IESS)</div>
<div style="position:absolute;left:38.00px;top:484.50px;width:1404.60px;height:16.90px;background:#f8cbad"></div>
<div style="position:absolute;left:38.00px;top:502.70px;width:1404.60px;height:16.67px;background:#c6e0b4"></div>
<div style="position:absolute;left:38.00px;top:519.37px;width:1404.60px;height:16.67px;background:#c6e0b4"></div>
<div style="position:absolute;left:38.00px;top:536.04px;width:1404.60px;height:16.67px;background:#c6e0b4"></div>
<div style="position:absolute;left:38.00px;top:552.71px;width:1404.60px;height:16.67px;background:#c6e0b4"></div>
<div style="position:absolute;left:38.00px;top:569.38px;width:1404.60px;height:16.67px;background:#f8cbad"></div>
<div style="position:absolute;left:38.00px;top:586.05px;width:1404.60px;height:16.67px;background:#f8cbad"></div>
<div style="position:absolute;left:38.00px;top:602.72px;width:1404.60px;height:16.67px;background:#f8cbad"></div>
<div style="position:absolute;left:38.00px;top:619.39px;width:1404.60px;height:16.67px;background:#f8cbad"></div>
<div style="position:absolute;left:38.00px;top:636.06px;width:1404.60px;height:16.67px;background:#f8cbad"></div>
<div style="position:absolute;left:38.00px;top:652.73px;width:1404.60px;height:16.67px;background:#f8cbad"></div>
<div style="position:absolute;left:38.00px;top:669.40px;width:1404.60px;height:16.67px;background:#f8cbad"></div>
<div style="position:absolute;left:38.00px;top:686.07px;width:1404.60px;height:16.67px;background:#f8cbad"></div>
<div style="position:absolute;left:38.00px;top:702.74px;width:1404.60px;height:16.67px;background:#f8cbad"></div>
<div style="position:absolute;left:38.00px;top:719.41px;width:1404.60px;height:16.67px;background:#f8cbad"></div>
<div style="position:absolute;left:38.00px;top:736.08px;width:1404.60px;height:16.67px;background:#c6e0b4"></div>
<div style="position:absolute;left:38.00px;top:752.75px;width:1404.60px;height:16.67px;background:#c6e0b4"></div>
<div style="position:absolute;left:38.00px;top:769.42px;width:1404.60px;height:16.67px;background:#c6e0b4"></div>
<div style="position:absolute;left:38.00px;top:786.09px;width:1404.60px;height:16.67px;background:#c6e0b4"></div>
<div style="position:absolute;left:38.00px;top:802.76px;width:1404.60px;height:16.67px;background:#c6e0b4"></div>
<div style="position:absolute;left:38.00px;top:819.43px;width:1404.60px;height:16.67px;background:#c6e0b4"></div>
<div style="position:absolute;left:38px;top:501px;width:1406px;height:1px;background:#000"></div>
<div style="position:absolute;left:75px;top:484px;width:1px;height:18px;background:#000"></div>
<div style="position:absolute;left:159px;top:484px;width:1px;height:18px;background:#000"></div>
<div style="position:absolute;left:243px;top:484px;width:1px;height:18px;background:#000"></div>
<div style="position:absolute;left:327px;top:484px;width:1px;height:18px;background:#000"></div>
<div style="position:absolute;left:668px;top:484px;width:1px;height:18px;background:#000"></div>
<div style="position:absolute;left:798px;top:484px;width:1px;height:18px;background:#000"></div>
<div style="position:absolute;left:899px;top:484px;width:1px;height:18px;background:#000"></div>
<div style="position:absolute;left:1002px;top:484px;width:1px;height:18px;background:#000"></div>
<div style="position:absolute;left:1094px;top:484px;width:1px;height:18px;background:#000"></div>
<div style="position:absolute;left:1175px;top:484px;width:1px;height:18px;background:#000"></div>
<div style="position:absolute;left:1237px;top:484px;width:1px;height:18px;background:#000"></div>
<div style="position:absolute;left:1306px;top:484px;width:1px;height:18px;background:#000"></div>
<div style="position:absolute;left:1390px;top:484px;width:1px;height:18px;background:#000"></div>
<div style="position:absolute;left:1442px;top:484px;width:1px;height:18px;background:#000"></div>
<div style="position:absolute;left:38px;top:519px;width:1406px;height:1px;background:#000"></div>
<div style="position:absolute;left:75px;top:503px;width:1px;height:17px;background:#000"></div>
<div style="position:absolute;left:159px;top:503px;width:1px;height:17px;background:#000"></div>
<div style="position:absolute;left:243px;top:503px;width:1px;height:17px;background:#000"></div>
<div style="position:absolute;left:327px;top:503px;width:1px;height:17px;background:#000"></div>
<div style="position:absolute;left:668px;top:503px;width:1px;height:17px;background:#000"></div>
<div style="position:absolute;left:798px;top:503px;width:1px;height:17px;background:#000"></div>
<div style="position:absolute;left:899px;top:503px;width:1px;height:17px;background:#000"></div>
<div style="position:absolute;left:1002px;top:503px;width:1px;height:17px;background:#000"></div>
<div style="position:absolute;left:1094px;top:503px;width:1px;height:17px;background:#000"></div>
<div style="position:absolute;left:1175px;top:503px;width:1px;height:17px;background:#000"></div>
<div style="position:absolute;left:1237px;top:503px;width:1px;height:17px;background:#000"></div>
<div style="position:absolute;left:1306px;top:503px;width:1px;height:17px;background:#000"></div>
<div style="position:absolute;left:1390px;top:503px;width:1px;height:17px;background:#000"></div>
<div style="position:absolute;left:1442px;top:503px;width:1px;height:17px;background:#000"></div>
<div style="position:absolute;left:38px;top:536px;width:1406px;height:1px;background:#000"></div>
<div style="position:absolute;left:75px;top:519px;width:1px;height:18px;background:#000"></div>
<div style="position:absolute;left:159px;top:519px;width:1px;height:18px;background:#000"></div>
<div style="position:absolute;left:243px;top:519px;width:1px;height:18px;background:#000"></div>
<div style="position:absolute;left:327px;top:519px;width:1px;height:18px;background:#000"></div>
<div style="position:absolute;left:668px;top:519px;width:1px;height:18px;background:#000"></div>
<div style="position:absolute;left:798px;top:519px;width:1px;height:18px;background:#000"></div>
<div style="position:absolute;left:899px;top:519px;width:1px;height:18px;background:#000"></div>
<div style="position:absolute;left:1002px;top:519px;width:1px;height:18px;background:#000"></div>
<div style="position:absolute;left:1094px;top:519px;width:1px;height:18px;background:#000"></div>
<div style="position:absolute;left:1175px;top:519px;width:1px;height:18px;background:#000"></div>
<div style="position:absolute;left:1237px;top:519px;width:1px;height:18px;background:#000"></div>
<div style="position:absolute;left:1306px;top:519px;width:1px;height:18px;background:#000"></div>
<div style="position:absolute;left:1390px;top:519px;width:1px;height:18px;background:#000"></div>
<div style="position:absolute;left:1442px;top:519px;width:1px;height:18px;background:#000"></div>
<div style="position:absolute;left:38px;top:552px;width:1406px;height:1px;background:#000"></div>
<div style="position:absolute;left:75px;top:536px;width:1px;height:18px;background:#000"></div>
<div style="position:absolute;left:159px;top:536px;width:1px;height:18px;background:#000"></div>
<div style="position:absolute;left:243px;top:536px;width:1px;height:18px;background:#000"></div>
<div style="position:absolute;left:327px;top:536px;width:1px;height:18px;background:#000"></div>
<div style="position:absolute;left:668px;top:536px;width:1px;height:18px;background:#000"></div>
<div style="position:absolute;left:798px;top:536px;width:1px;height:18px;background:#000"></div>
<div style="position:absolute;left:899px;top:536px;width:1px;height:18px;background:#000"></div>
<div style="position:absolute;left:1002px;top:536px;width:1px;height:18px;background:#000"></div>
<div style="position:absolute;left:1094px;top:536px;width:1px;height:18px;background:#000"></div>
<div style="position:absolute;left:1175px;top:536px;width:1px;height:18px;background:#000"></div>
<div style="position:absolute;left:1237px;top:536px;width:1px;height:18px;background:#000"></div>
<div style="position:absolute;left:1306px;top:536px;width:1px;height:18px;background:#000"></div>
<div style="position:absolute;left:1390px;top:536px;width:1px;height:18px;background:#000"></div>
<div style="position:absolute;left:1442px;top:536px;width:1px;height:18px;background:#000"></div>
<div style="position:absolute;left:38px;top:569px;width:1406px;height:1px;background:#000"></div>
<div style="position:absolute;left:75px;top:553px;width:1px;height:17px;background:#000"></div>
<div style="position:absolute;left:159px;top:553px;width:1px;height:17px;background:#000"></div>
<div style="position:absolute;left:243px;top:553px;width:1px;height:17px;background:#000"></div>
<div style="position:absolute;left:327px;top:553px;width:1px;height:17px;background:#000"></div>
<div style="position:absolute;left:668px;top:553px;width:1px;height:17px;background:#000"></div>
<div style="position:absolute;left:798px;top:553px;width:1px;height:17px;background:#000"></div>
<div style="position:absolute;left:899px;top:553px;width:1px;height:17px;background:#000"></div>
<div style="position:absolute;left:1002px;top:553px;width:1px;height:17px;background:#000"></div>
<div style="position:absolute;left:1094px;top:553px;width:1px;height:17px;background:#000"></div>
<div style="position:absolute;left:1175px;top:553px;width:1px;height:17px;background:#000"></div>
<div style="position:absolute;left:1237px;top:553px;width:1px;height:17px;background:#000"></div>
<div style="position:absolute;left:1306px;top:553px;width:1px;height:17px;background:#000"></div>
<div style="position:absolute;left:1390px;top:553px;width:1px;height:17px;background:#000"></div>
<div style="position:absolute;left:1442px;top:553px;width:1px;height:17px;background:#000"></div>
<div style="position:absolute;left:38px;top:586px;width:1406px;height:1px;background:#000"></div>
<div style="position:absolute;left:75px;top:569px;width:1px;height:18px;background:#000"></div>
<div style="position:absolute;left:159px;top:569px;width:1px;height:18px;background:#000"></div>
<div style="position:absolute;left:243px;top:569px;width:1px;height:18px;background:#000"></div>
<div style="position:absolute;left:327px;top:569px;width:1px;height:18px;background:#000"></div>
<div style="position:absolute;left:668px;top:569px;width:1px;height:18px;background:#000"></div>
<div style="position:absolute;left:798px;top:569px;width:1px;height:18px;background:#000"></div>
<div style="position:absolute;left:899px;top:569px;width:1px;height:18px;background:#000"></div>
<div style="position:absolute;left:1002px;top:569px;width:1px;height:18px;background:#000"></div>
<div style="position:absolute;left:1094px;top:569px;width:1px;height:18px;background:#000"></div>
<div style="position:absolute;left:1175px;top:569px;width:1px;height:18px;background:#000"></div>
<div style="position:absolute;left:1237px;top:569px;width:1px;height:18px;background:#000"></div>
<div style="position:absolute;left:1306px;top:569px;width:1px;height:18px;background:#000"></div>
<div style="position:absolute;left:1390px;top:569px;width:1px;height:18px;background:#000"></div>
<div style="position:absolute;left:1442px;top:569px;width:1px;height:18px;background:#000"></div>
<div style="position:absolute;left:38px;top:602px;width:1406px;height:1px;background:#000"></div>
<div style="position:absolute;left:75px;top:586px;width:1px;height:18px;background:#000"></div>
<div style="position:absolute;left:159px;top:586px;width:1px;height:18px;background:#000"></div>
<div style="position:absolute;left:243px;top:586px;width:1px;height:18px;background:#000"></div>
<div style="position:absolute;left:327px;top:586px;width:1px;height:18px;background:#000"></div>
<div style="position:absolute;left:668px;top:586px;width:1px;height:18px;background:#000"></div>
<div style="position:absolute;left:798px;top:586px;width:1px;height:18px;background:#000"></div>
<div style="position:absolute;left:899px;top:586px;width:1px;height:18px;background:#000"></div>
<div style="position:absolute;left:1002px;top:586px;width:1px;height:18px;background:#000"></div>
<div style="position:absolute;left:1094px;top:586px;width:1px;height:18px;background:#000"></div>
<div style="position:absolute;left:1175px;top:586px;width:1px;height:18px;background:#000"></div>
<div style="position:absolute;left:1237px;top:586px;width:1px;height:18px;background:#000"></div>
<div style="position:absolute;left:1306px;top:586px;width:1px;height:18px;background:#000"></div>
<div style="position:absolute;left:1390px;top:586px;width:1px;height:18px;background:#000"></div>
<div style="position:absolute;left:1442px;top:586px;width:1px;height:18px;background:#000"></div>
<div style="position:absolute;left:38px;top:619px;width:1406px;height:1px;background:#000"></div>
<div style="position:absolute;left:75px;top:603px;width:1px;height:17px;background:#000"></div>
<div style="position:absolute;left:159px;top:603px;width:1px;height:17px;background:#000"></div>
<div style="position:absolute;left:243px;top:603px;width:1px;height:17px;background:#000"></div>
<div style="position:absolute;left:327px;top:603px;width:1px;height:17px;background:#000"></div>
<div style="position:absolute;left:668px;top:603px;width:1px;height:17px;background:#000"></div>
<div style="position:absolute;left:798px;top:603px;width:1px;height:17px;background:#000"></div>
<div style="position:absolute;left:899px;top:603px;width:1px;height:17px;background:#000"></div>
<div style="position:absolute;left:1002px;top:603px;width:1px;height:17px;background:#000"></div>
<div style="position:absolute;left:1094px;top:603px;width:1px;height:17px;background:#000"></div>
<div style="position:absolute;left:1175px;top:603px;width:1px;height:17px;background:#000"></div>
<div style="position:absolute;left:1237px;top:603px;width:1px;height:17px;background:#000"></div>
<div style="position:absolute;left:1306px;top:603px;width:1px;height:17px;background:#000"></div>
<div style="position:absolute;left:1390px;top:603px;width:1px;height:17px;background:#000"></div>
<div style="position:absolute;left:1442px;top:603px;width:1px;height:17px;background:#000"></div>
<div style="position:absolute;left:38px;top:636px;width:1406px;height:1px;background:#000"></div>
<div style="position:absolute;left:75px;top:619px;width:1px;height:18px;background:#000"></div>
<div style="position:absolute;left:159px;top:619px;width:1px;height:18px;background:#000"></div>
<div style="position:absolute;left:243px;top:619px;width:1px;height:18px;background:#000"></div>
<div style="position:absolute;left:327px;top:619px;width:1px;height:18px;background:#000"></div>
<div style="position:absolute;left:668px;top:619px;width:1px;height:18px;background:#000"></div>
<div style="position:absolute;left:798px;top:619px;width:1px;height:18px;background:#000"></div>
<div style="position:absolute;left:899px;top:619px;width:1px;height:18px;background:#000"></div>
<div style="position:absolute;left:1002px;top:619px;width:1px;height:18px;background:#000"></div>
<div style="position:absolute;left:1094px;top:619px;width:1px;height:18px;background:#000"></div>
<div style="position:absolute;left:1175px;top:619px;width:1px;height:18px;background:#000"></div>
<div style="position:absolute;left:1237px;top:619px;width:1px;height:18px;background:#000"></div>
<div style="position:absolute;left:1306px;top:619px;width:1px;height:18px;background:#000"></div>
<div style="position:absolute;left:1390px;top:619px;width:1px;height:18px;background:#000"></div>
<div style="position:absolute;left:1442px;top:619px;width:1px;height:18px;background:#000"></div>
<div style="position:absolute;left:38px;top:652px;width:1406px;height:1px;background:#000"></div>
<div style="position:absolute;left:75px;top:636px;width:1px;height:18px;background:#000"></div>
<div style="position:absolute;left:159px;top:636px;width:1px;height:18px;background:#000"></div>
<div style="position:absolute;left:243px;top:636px;width:1px;height:18px;background:#000"></div>
<div style="position:absolute;left:327px;top:636px;width:1px;height:18px;background:#000"></div>
<div style="position:absolute;left:668px;top:636px;width:1px;height:18px;background:#000"></div>
<div style="position:absolute;left:798px;top:636px;width:1px;height:18px;background:#000"></div>
<div style="position:absolute;left:899px;top:636px;width:1px;height:18px;background:#000"></div>
<div style="position:absolute;left:1002px;top:636px;width:1px;height:18px;background:#000"></div>
<div style="position:absolute;left:1094px;top:636px;width:1px;height:18px;background:#000"></div>
<div style="position:absolute;left:1175px;top:636px;width:1px;height:18px;background:#000"></div>
<div style="position:absolute;left:1237px;top:636px;width:1px;height:18px;background:#000"></div>
<div style="position:absolute;left:1306px;top:636px;width:1px;height:18px;background:#000"></div>
<div style="position:absolute;left:1390px;top:636px;width:1px;height:18px;background:#000"></div>
<div style="position:absolute;left:1442px;top:636px;width:1px;height:18px;background:#000"></div>
<div style="position:absolute;left:38px;top:669px;width:1406px;height:1px;background:#000"></div>
<div style="position:absolute;left:75px;top:653px;width:1px;height:17px;background:#000"></div>
<div style="position:absolute;left:159px;top:653px;width:1px;height:17px;background:#000"></div>
<div style="position:absolute;left:243px;top:653px;width:1px;height:17px;background:#000"></div>
<div style="position:absolute;left:327px;top:653px;width:1px;height:17px;background:#000"></div>
<div style="position:absolute;left:668px;top:653px;width:1px;height:17px;background:#000"></div>
<div style="position:absolute;left:798px;top:653px;width:1px;height:17px;background:#000"></div>
<div style="position:absolute;left:899px;top:653px;width:1px;height:17px;background:#000"></div>
<div style="position:absolute;left:1002px;top:653px;width:1px;height:17px;background:#000"></div>
<div style="position:absolute;left:1094px;top:653px;width:1px;height:17px;background:#000"></div>
<div style="position:absolute;left:1175px;top:653px;width:1px;height:17px;background:#000"></div>
<div style="position:absolute;left:1237px;top:653px;width:1px;height:17px;background:#000"></div>
<div style="position:absolute;left:1306px;top:653px;width:1px;height:17px;background:#000"></div>
<div style="position:absolute;left:1390px;top:653px;width:1px;height:17px;background:#000"></div>
<div style="position:absolute;left:1442px;top:653px;width:1px;height:17px;background:#000"></div>
<div style="position:absolute;left:38px;top:686px;width:1406px;height:1px;background:#000"></div>
<div style="position:absolute;left:75px;top:669px;width:1px;height:18px;background:#000"></div>
<div style="position:absolute;left:159px;top:669px;width:1px;height:18px;background:#000"></div>
<div style="position:absolute;left:243px;top:669px;width:1px;height:18px;background:#000"></div>
<div style="position:absolute;left:327px;top:669px;width:1px;height:18px;background:#000"></div>
<div style="position:absolute;left:668px;top:669px;width:1px;height:18px;background:#000"></div>
<div style="position:absolute;left:798px;top:669px;width:1px;height:18px;background:#000"></div>
<div style="position:absolute;left:899px;top:669px;width:1px;height:18px;background:#000"></div>
<div style="position:absolute;left:1002px;top:669px;width:1px;height:18px;background:#000"></div>
<div style="position:absolute;left:1094px;top:669px;width:1px;height:18px;background:#000"></div>
<div style="position:absolute;left:1175px;top:669px;width:1px;height:18px;background:#000"></div>
<div style="position:absolute;left:1237px;top:669px;width:1px;height:18px;background:#000"></div>
<div style="position:absolute;left:1306px;top:669px;width:1px;height:18px;background:#000"></div>
<div style="position:absolute;left:1390px;top:669px;width:1px;height:18px;background:#000"></div>
<div style="position:absolute;left:1442px;top:669px;width:1px;height:18px;background:#000"></div>
<div style="position:absolute;left:38px;top:702px;width:1406px;height:1px;background:#000"></div>
<div style="position:absolute;left:75px;top:686px;width:1px;height:18px;background:#000"></div>
<div style="position:absolute;left:159px;top:686px;width:1px;height:18px;background:#000"></div>
<div style="position:absolute;left:243px;top:686px;width:1px;height:18px;background:#000"></div>
<div style="position:absolute;left:327px;top:686px;width:1px;height:18px;background:#000"></div>
<div style="position:absolute;left:668px;top:686px;width:1px;height:18px;background:#000"></div>
<div style="position:absolute;left:798px;top:686px;width:1px;height:18px;background:#000"></div>
<div style="position:absolute;left:899px;top:686px;width:1px;height:18px;background:#000"></div>
<div style="position:absolute;left:1002px;top:686px;width:1px;height:18px;background:#000"></div>
<div style="position:absolute;left:1094px;top:686px;width:1px;height:18px;background:#000"></div>
<div style="position:absolute;left:1175px;top:686px;width:1px;height:18px;background:#000"></div>
<div style="position:absolute;left:1237px;top:686px;width:1px;height:18px;background:#000"></div>
<div style="position:absolute;left:1306px;top:686px;width:1px;height:18px;background:#000"></div>
<div style="position:absolute;left:1390px;top:686px;width:1px;height:18px;background:#000"></div>
<div style="position:absolute;left:1442px;top:686px;width:1px;height:18px;background:#000"></div>
<div style="position:absolute;left:38px;top:719px;width:1406px;height:1px;background:#000"></div>
<div style="position:absolute;left:75px;top:703px;width:1px;height:17px;background:#000"></div>
<div style="position:absolute;left:159px;top:703px;width:1px;height:17px;background:#000"></div>
<div style="position:absolute;left:243px;top:703px;width:1px;height:17px;background:#000"></div>
<div style="position:absolute;left:327px;top:703px;width:1px;height:17px;background:#000"></div>
<div style="position:absolute;left:668px;top:703px;width:1px;height:17px;background:#000"></div>
<div style="position:absolute;left:798px;top:703px;width:1px;height:17px;background:#000"></div>
<div style="position:absolute;left:899px;top:703px;width:1px;height:17px;background:#000"></div>
<div style="position:absolute;left:1002px;top:703px;width:1px;height:17px;background:#000"></div>
<div style="position:absolute;left:1094px;top:703px;width:1px;height:17px;background:#000"></div>
<div style="position:absolute;left:1175px;top:703px;width:1px;height:17px;background:#000"></div>
<div style="position:absolute;left:1237px;top:703px;width:1px;height:17px;background:#000"></div>
<div style="position:absolute;left:1306px;top:703px;width:1px;height:17px;background:#000"></div>
<div style="position:absolute;left:1390px;top:703px;width:1px;height:17px;background:#000"></div>
<div style="position:absolute;left:1442px;top:703px;width:1px;height:17px;background:#000"></div>
<div style="position:absolute;left:38px;top:736px;width:1406px;height:1px;background:#000"></div>
<div style="position:absolute;left:75px;top:719px;width:1px;height:18px;background:#000"></div>
<div style="position:absolute;left:159px;top:719px;width:1px;height:18px;background:#000"></div>
<div style="position:absolute;left:243px;top:719px;width:1px;height:18px;background:#000"></div>
<div style="position:absolute;left:327px;top:719px;width:1px;height:18px;background:#000"></div>
<div style="position:absolute;left:668px;top:719px;width:1px;height:18px;background:#000"></div>
<div style="position:absolute;left:798px;top:719px;width:1px;height:18px;background:#000"></div>
<div style="position:absolute;left:899px;top:719px;width:1px;height:18px;background:#000"></div>
<div style="position:absolute;left:1002px;top:719px;width:1px;height:18px;background:#000"></div>
<div style="position:absolute;left:1094px;top:719px;width:1px;height:18px;background:#000"></div>
<div style="position:absolute;left:1175px;top:719px;width:1px;height:18px;background:#000"></div>
<div style="position:absolute;left:1237px;top:719px;width:1px;height:18px;background:#000"></div>
<div style="position:absolute;left:1306px;top:719px;width:1px;height:18px;background:#000"></div>
<div style="position:absolute;left:1390px;top:719px;width:1px;height:18px;background:#000"></div>
<div style="position:absolute;left:1442px;top:719px;width:1px;height:18px;background:#000"></div>
<div style="position:absolute;left:38px;top:752px;width:1406px;height:1px;background:#000"></div>
<div style="position:absolute;left:75px;top:736px;width:1px;height:18px;background:#000"></div>
<div style="position:absolute;left:159px;top:736px;width:1px;height:18px;background:#000"></div>
<div style="position:absolute;left:243px;top:736px;width:1px;height:18px;background:#000"></div>
<div style="position:absolute;left:327px;top:736px;width:1px;height:18px;background:#000"></div>
<div style="position:absolute;left:668px;top:736px;width:1px;height:18px;background:#000"></div>
<div style="position:absolute;left:798px;top:736px;width:1px;height:18px;background:#000"></div>
<div style="position:absolute;left:899px;top:736px;width:1px;height:18px;background:#000"></div>
<div style="position:absolute;left:1002px;top:736px;width:1px;height:18px;background:#000"></div>
<div style="position:absolute;left:1094px;top:736px;width:1px;height:18px;background:#000"></div>
<div style="position:absolute;left:1175px;top:736px;width:1px;height:18px;background:#000"></div>
<div style="position:absolute;left:1237px;top:736px;width:1px;height:18px;background:#000"></div>
<div style="position:absolute;left:1306px;top:736px;width:1px;height:18px;background:#000"></div>
<div style="position:absolute;left:1390px;top:736px;width:1px;height:18px;background:#000"></div>
<div style="position:absolute;left:1442px;top:736px;width:1px;height:18px;background:#000"></div>
<div style="position:absolute;left:38px;top:769px;width:1406px;height:1px;background:#000"></div>
<div style="position:absolute;left:75px;top:753px;width:1px;height:17px;background:#000"></div>
<div style="position:absolute;left:159px;top:753px;width:1px;height:17px;background:#000"></div>
<div style="position:absolute;left:243px;top:753px;width:1px;height:17px;background:#000"></div>
<div style="position:absolute;left:327px;top:753px;width:1px;height:17px;background:#000"></div>
<div style="position:absolute;left:668px;top:753px;width:1px;height:17px;background:#000"></div>
<div style="position:absolute;left:798px;top:753px;width:1px;height:17px;background:#000"></div>
<div style="position:absolute;left:899px;top:753px;width:1px;height:17px;background:#000"></div>
<div style="position:absolute;left:1002px;top:753px;width:1px;height:17px;background:#000"></div>
<div style="position:absolute;left:1094px;top:753px;width:1px;height:17px;background:#000"></div>
<div style="position:absolute;left:1175px;top:753px;width:1px;height:17px;background:#000"></div>
<div style="position:absolute;left:1237px;top:753px;width:1px;height:17px;background:#000"></div>
<div style="position:absolute;left:1306px;top:753px;width:1px;height:17px;background:#000"></div>
<div style="position:absolute;left:1390px;top:753px;width:1px;height:17px;background:#000"></div>
<div style="position:absolute;left:1442px;top:753px;width:1px;height:17px;background:#000"></div>
<div style="position:absolute;left:38px;top:786px;width:1406px;height:1px;background:#000"></div>
<div style="position:absolute;left:75px;top:769px;width:1px;height:18px;background:#000"></div>
<div style="position:absolute;left:159px;top:769px;width:1px;height:18px;background:#000"></div>
<div style="position:absolute;left:243px;top:769px;width:1px;height:18px;background:#000"></div>
<div style="position:absolute;left:327px;top:769px;width:1px;height:18px;background:#000"></div>
<div style="position:absolute;left:668px;top:769px;width:1px;height:18px;background:#000"></div>
<div style="position:absolute;left:798px;top:769px;width:1px;height:18px;background:#000"></div>
<div style="position:absolute;left:899px;top:769px;width:1px;height:18px;background:#000"></div>
<div style="position:absolute;left:1002px;top:769px;width:1px;height:18px;background:#000"></div>
<div style="position:absolute;left:1094px;top:769px;width:1px;height:18px;background:#000"></div>
<div style="position:absolute;left:1175px;top:769px;width:1px;height:18px;background:#000"></div>
<div style="position:absolute;left:1237px;top:769px;width:1px;height:18px;background:#000"></div>
<div style="position:absolute;left:1306px;top:769px;width:1px;height:18px;background:#000"></div>
<div style="position:absolute;left:1390px;top:769px;width:1px;height:18px;background:#000"></div>
<div style="position:absolute;left:1442px;top:769px;width:1px;height:18px;background:#000"></div>
<div style="position:absolute;left:38px;top:802px;width:1406px;height:1px;background:#000"></div>
<div style="position:absolute;left:75px;top:786px;width:1px;height:18px;background:#000"></div>
<div style="position:absolute;left:159px;top:786px;width:1px;height:18px;background:#000"></div>
<div style="position:absolute;left:243px;top:786px;width:1px;height:18px;background:#000"></div>
<div style="position:absolute;left:327px;top:786px;width:1px;height:18px;background:#000"></div>
<div style="position:absolute;left:668px;top:786px;width:1px;height:18px;background:#000"></div>
<div style="position:absolute;left:798px;top:786px;width:1px;height:18px;background:#000"></div>
<div style="position:absolute;left:899px;top:786px;width:1px;height:18px;background:#000"></div>
<div style="position:absolute;left:1002px;top:786px;width:1px;height:18px;background:#000"></div>
<div style="position:absolute;left:1094px;top:786px;width:1px;height:18px;background:#000"></div>
<div style="position:absolute;left:1175px;top:786px;width:1px;height:18px;background:#000"></div>
<div style="position:absolute;left:1237px;top:786px;width:1px;height:18px;background:#000"></div>
<div style="position:absolute;left:1306px;top:786px;width:1px;height:18px;background:#000"></div>
<div style="position:absolute;left:1390px;top:786px;width:1px;height:18px;background:#000"></div>
<div style="position:absolute;left:1442px;top:786px;width:1px;height:18px;background:#000"></div>
<div style="position:absolute;left:38px;top:819px;width:1406px;height:1px;background:#000"></div>
<div style="position:absolute;left:75px;top:803px;width:1px;height:17px;background:#000"></div>
<div style="position:absolute;left:159px;top:803px;width:1px;height:17px;background:#000"></div>
<div style="position:absolute;left:243px;top:803px;width:1px;height:17px;background:#000"></div>
<div style="position:absolute;left:327px;top:803px;width:1px;height:17px;background:#000"></div>
<div style="position:absolute;left:668px;top:803px;width:1px;height:17px;background:#000"></div>
<div style="position:absolute;left:798px;top:803px;width:1px;height:17px;background:#000"></div>
<div style="position:absolute;left:899px;top:803px;width:1px;height:17px;background:#000"></div>
<div style="position:absolute;left:1002px;top:803px;width:1px;height:17px;background:#000"></div>
<div style="position:absolute;left:1094px;top:803px;width:1px;height:17px;background:#000"></div>
<div style="position:absolute;left:1175px;top:803px;width:1px;height:17px;background:#000"></div>
<div style="position:absolute;left:1237px;top:803px;width:1px;height:17px;background:#000"></div>
<div style="position:absolute;left:1306px;top:803px;width:1px;height:17px;background:#000"></div>
<div style="position:absolute;left:1390px;top:803px;width:1px;height:17px;background:#000"></div>
<div style="position:absolute;left:1442px;top:803px;width:1px;height:17px;background:#000"></div>
<div style="position:absolute;left:38px;top:836px;width:1406px;height:1px;background:#000"></div>
<div style="position:absolute;left:75px;top:819px;width:1px;height:18px;background:#000"></div>
<div style="position:absolute;left:159px;top:819px;width:1px;height:18px;background:#000"></div>
<div style="position:absolute;left:243px;top:819px;width:1px;height:18px;background:#000"></div>
<div style="position:absolute;left:327px;top:819px;width:1px;height:18px;background:#000"></div>
<div style="position:absolute;left:668px;top:819px;width:1px;height:18px;background:#000"></div>
<div style="position:absolute;left:798px;top:819px;width:1px;height:18px;background:#000"></div>
<div style="position:absolute;left:899px;top:819px;width:1px;height:18px;background:#000"></div>
<div style="position:absolute;left:1002px;top:819px;width:1px;height:18px;background:#000"></div>
<div style="position:absolute;left:1094px;top:819px;width:1px;height:18px;background:#000"></div>
<div style="position:absolute;left:1175px;top:819px;width:1px;height:18px;background:#000"></div>
<div style="position:absolute;left:1237px;top:819px;width:1px;height:18px;background:#000"></div>
<div style="position:absolute;left:1306px;top:819px;width:1px;height:18px;background:#000"></div>
<div style="position:absolute;left:1390px;top:819px;width:1px;height:18px;background:#000"></div>
<div style="position:absolute;left:1442px;top:819px;width:1px;height:18px;background:#000"></div>
<div style="position:absolute;left:38px;top:484px;width:1406px;height:1px;background:#000"></div>
<div style="position:absolute;left:38.00px;top:487.20px;width:34.00px;white-space:nowrap;font:10.9px/14px 'Liberation Sans',sans-serif;color:#000;text-align:right">1</div>
<div style="position:absolute;left:78.5px;top:487.20px;width:80px;overflow:hidden;white-space:nowrap;font:10.9px/14px 'Liberation Sans',sans-serif;color:#000">Azuay</div>
<div style="position:absolute;left:162.5px;top:487.20px;width:80px;overflow:hidden;white-space:nowrap;font:10.9px/14px 'Liberation Sans',sans-serif;color:#000">Chordeleg</div>
<div style="position:absolute;left:243.40px;top:487.20px;width:80.80px;white-space:nowrap;font:10.9px/14px 'Liberation Sans',sans-serif;color:#000;text-align:right">160032040001</div>
<div style="position:absolute;left:330.80px;top:487.20px;white-space:nowrap;font:10.9px/14px 'Liberation Sans',sans-serif;color:#000">GAD Parroquial La Unión</div>
<div style="position:absolute;left:38.00px;top:505.17px;width:34.00px;white-space:nowrap;font:10.9px/14px 'Liberation Sans',sans-serif;color:#000;text-align:right">706</div>
<div style="position:absolute;left:78.5px;top:505.17px;width:80px;overflow:hidden;white-space:nowrap;font:10.9px/14px 'Liberation Sans',sans-serif;color:#000">Santa Elena</div>
<div style="position:absolute;left:162.5px;top:505.17px;width:80px;overflow:hidden;white-space:nowrap;font:10.9px/14px 'Liberation Sans',sans-serif;color:#000">Santa Elena</div>
<div style="position:absolute;left:243.40px;top:505.17px;width:80.80px;white-space:nowrap;font:10.9px/14px 'Liberation Sans',sans-serif;color:#000;text-align:right">968565390001</div>
<div style="position:absolute;left:330.80px;top:505.17px;white-space:nowrap;font:10.9px/14px 'Liberation Sans',sans-serif;color:#000">GAD Parroquial Colonche</div>
<div style="position:absolute;left:38.00px;top:521.84px;width:34.00px;white-space:nowrap;font:10.9px/14px 'Liberation Sans',sans-serif;color:#000;text-align:right">707</div>
<div style="position:absolute;left:78.5px;top:521.84px;width:80px;overflow:hidden;white-space:nowrap;font:10.9px/14px 'Liberation Sans',sans-serif;color:#000">Santa Elena</div>
<div style="position:absolute;left:162.5px;top:521.84px;width:80px;overflow:hidden;white-space:nowrap;font:10.9px/14px 'Liberation Sans',sans-serif;color:#000">Santa Elena</div>
<div style="position:absolute;left:243.40px;top:521.84px;width:80.80px;white-space:nowrap;font:10.9px/14px 'Liberation Sans',sans-serif;color:#000;text-align:right">968538230001</div>
<div style="position:absolute;left:330.80px;top:521.84px;white-space:nowrap;font:10.9px/14px 'Liberation Sans',sans-serif;color:#000">GAD Parroquial Manglaralto</div>
<div style="position:absolute;left:38.00px;top:538.51px;width:34.00px;white-space:nowrap;font:10.9px/14px 'Liberation Sans',sans-serif;color:#000;text-align:right">708</div>
<div style="position:absolute;left:78.5px;top:538.51px;width:80px;overflow:hidden;white-space:nowrap;font:10.9px/14px 'Liberation Sans',sans-serif;color:#000">Santa Elena</div>
<div style="position:absolute;left:162.5px;top:538.51px;width:80px;overflow:hidden;white-space:nowrap;font:10.9px/14px 'Liberation Sans',sans-serif;color:#000">Santa Elena</div>
<div style="position:absolute;left:243.40px;top:538.51px;width:80.80px;white-space:nowrap;font:10.9px/14px 'Liberation Sans',sans-serif;color:#000;text-align:right">968575510001</div>
<div style="position:absolute;left:330.80px;top:538.51px;white-space:nowrap;font:10.9px/14px 'Liberation Sans',sans-serif;color:#000">GAD Parroquial San Jose de Ancon</div>
<div style="position:absolute;left:38.00px;top:555.18px;width:34.00px;white-space:nowrap;font:10.9px/14px 'Liberation Sans',sans-serif;color:#000;text-align:right">709</div>
<div style="position:absolute;left:78.5px;top:555.18px;width:80px;overflow:hidden;white-space:nowrap;font:10.9px/14px 'Liberation Sans',sans-serif;color:#000">Santa Elena</div>
<div style="position:absolute;left:162.5px;top:555.18px;width:80px;overflow:hidden;white-space:nowrap;font:10.9px/14px 'Liberation Sans',sans-serif;color:#000">Santa Elena</div>
<div style="position:absolute;left:243.40px;top:555.18px;width:80.80px;white-space:nowrap;font:10.9px/14px 'Liberation Sans',sans-serif;color:#000;text-align:right">968537500001</div>
<div style="position:absolute;left:330.80px;top:555.18px;white-space:nowrap;font:10.9px/14px 'Liberation Sans',sans-serif;color:#000">GAD Parroquial Simon Bolivar (Julio Moreno)</div>
<div style="position:absolute;left:38.00px;top:571.85px;width:34.00px;white-space:nowrap;font:10.9px/14px 'Liberation Sans',sans-serif;color:#000;text-align:right">710</div>
<div style="position:absolute;left:78.5px;top:571.85px;width:80px;overflow:hidden;white-space:nowrap;font:10.9px/14px 'Liberation Sans',sans-serif;color:#000">Santo Domingo de los Tsáchilas</div>
<div style="position:absolute;left:162.5px;top:571.85px;width:80px;overflow:hidden;white-space:nowrap;font:10.9px/14px 'Liberation Sans',sans-serif;color:#000">La Concordia</div>
<div style="position:absolute;left:243.40px;top:571.85px;width:80.80px;white-space:nowrap;font:10.9px/14px 'Liberation Sans',sans-serif;color:#000;text-align:right">2360006800001</div>
<div style="position:absolute;left:330.80px;top:571.85px;white-space:nowrap;font:10.9px/14px 'Liberation Sans',sans-serif;color:#000">GAD Parroquial La Villegas</div>
<div style="position:absolute;left:38.00px;top:588.52px;width:34.00px;white-space:nowrap;font:10.9px/14px 'Liberation Sans',sans-serif;color:#000;text-align:right">711</div>
<div style="position:absolute;left:78.5px;top:588.52px;width:80px;overflow:hidden;white-space:nowrap;font:10.9px/14px 'Liberation Sans',sans-serif;color:#000">Santo Domingo de los Tsáchilas</div>
<div style="position:absolute;left:162.5px;top:588.52px;width:80px;overflow:hidden;white-space:nowrap;font:10.9px/14px 'Liberation Sans',sans-serif;color:#000">La Concordia</div>
<div style="position:absolute;left:243.40px;top:588.52px;width:80.80px;white-space:nowrap;font:10.9px/14px 'Liberation Sans',sans-serif;color:#000;text-align:right">2360006990001</div>
<div style="position:absolute;left:330.80px;top:588.52px;white-space:nowrap;font:10.9px/14px 'Liberation Sans',sans-serif;color:#000">GAD Parroquial Monterrey</div>
<div style="position:absolute;left:38.00px;top:605.19px;width:34.00px;white-space:nowrap;font:10.9px/14px 'Liberation Sans',sans-serif;color:#000;text-align:right">712</div>
<div style="position:absolute;left:78.5px;top:605.19px;width:80px;overflow:hidden;white-space:nowrap;font:10.9px/14px 'Liberation Sans',sans-serif;color:#000">Santo Domingo de los Tsáchilas</div>
<div style="position:absolute;left:162.5px;top:605.19px;width:80px;overflow:hidden;white-space:nowrap;font:10.9px/14px 'Liberation Sans',sans-serif;color:#000">La Concordia</div>
<div style="position:absolute;left:243.40px;top:605.19px;width:80.80px;white-space:nowrap;font:10.9px/14px 'Liberation Sans',sans-serif;color:#000;text-align:right">2360007020001</div>
<div style="position:absolute;left:330.80px;top:605.19px;white-space:nowrap;font:10.9px/14px 'Liberation Sans',sans-serif;color:#000">GAD Parroquial Plan Piloto</div>
<div style="position:absolute;left:38.00px;top:621.86px;width:34.00px;white-space:nowrap;font:10.9px/14px 'Liberation Sans',sans-serif;color:#000;text-align:right">713</div>
<div style="position:absolute;left:78.5px;top:621.86px;width:80px;overflow:hidden;white-space:nowrap;font:10.9px/14px 'Liberation Sans',sans-serif;color:#000">Santo Domingo de los Tsáchilas</div>
<div style="position:absolute;left:162.5px;top:621.86px;width:80px;overflow:hidden;white-space:nowrap;font:10.9px/14px 'Liberation Sans',sans-serif;color:#000">Santo Domingo</div>
<div style="position:absolute;left:243.40px;top:621.86px;width:80.80px;white-space:nowrap;font:10.9px/14px 'Liberation Sans',sans-serif;color:#000;text-align:right">1768117060001</div>
<div style="position:absolute;left:330.80px;top:621.86px;white-space:nowrap;font:10.9px/14px 'Liberation Sans',sans-serif;color:#000">GAD Parroquial Alluriquin</div>
<div style="position:absolute;left:38.00px;top:638.53px;width:34.00px;white-space:nowrap;font:10.9px/14px 'Liberation Sans',sans-serif;color:#000;text-align:right">714</div>
<div style="position:absolute;left:78.5px;top:638.53px;width:80px;overflow:hidden;white-space:nowrap;font:10.9px/14px 'Liberation Sans',sans-serif;color:#000">Santo Domingo de los Tsáchilas</div>
<div style="position:absolute;left:162.5px;top:638.53px;width:80px;overflow:hidden;white-space:nowrap;font:10.9px/14px 'Liberation Sans',sans-serif;color:#000">Santo Domingo</div>
<div style="position:absolute;left:243.40px;top:638.53px;width:80.80px;white-space:nowrap;font:10.9px/14px 'Liberation Sans',sans-serif;color:#000;text-align:right">1768113820001</div>
<div style="position:absolute;left:330.80px;top:638.53px;white-space:nowrap;font:10.9px/14px 'Liberation Sans',sans-serif;color:#000">GAD Parroquial El Esfuerzo</div>
<div style="position:absolute;left:38.00px;top:655.20px;width:34.00px;white-space:nowrap;font:10.9px/14px 'Liberation Sans',sans-serif;color:#000;text-align:right">715</div>
<div style="position:absolute;left:78.5px;top:655.20px;width:80px;overflow:hidden;white-space:nowrap;font:10.9px/14px 'Liberation Sans',sans-serif;color:#000">Santo Domingo de los Tsáchilas</div>
<div style="position:absolute;left:162.5px;top:655.20px;width:80px;overflow:hidden;white-space:nowrap;font:10.9px/14px 'Liberation Sans',sans-serif;color:#000">Santo Domingo</div>
<div style="position:absolute;left:243.40px;top:655.20px;width:80.80px;white-space:nowrap;font:10.9px/14px 'Liberation Sans',sans-serif;color:#000;text-align:right">1768125750001</div>
<div style="position:absolute;left:330.80px;top:655.20px;white-space:nowrap;font:10.9px/14px 'Liberation Sans',sans-serif;color:#000">GAD Parroquial Luz de America</div>
<div style="position:absolute;left:38.00px;top:671.87px;width:34.00px;white-space:nowrap;font:10.9px/14px 'Liberation Sans',sans-serif;color:#000;text-align:right">716</div>
<div style="position:absolute;left:78.5px;top:671.87px;width:80px;overflow:hidden;white-space:nowrap;font:10.9px/14px 'Liberation Sans',sans-serif;color:#000">Santo Domingo de los Tsáchilas</div>
<div style="position:absolute;left:162.5px;top:671.87px;width:80px;overflow:hidden;white-space:nowrap;font:10.9px/14px 'Liberation Sans',sans-serif;color:#000">Santo Domingo</div>
<div style="position:absolute;left:243.40px;top:671.87px;width:80.80px;white-space:nowrap;font:10.9px/14px 'Liberation Sans',sans-serif;color:#000;text-align:right">1768048310001</div>
<div style="position:absolute;left:330.80px;top:671.87px;white-space:nowrap;font:10.9px/14px 'Liberation Sans',sans-serif;color:#000">GAD Parroquial Puerto Limon</div>
<div style="position:absolute;left:38.00px;top:688.54px;width:34.00px;white-space:nowrap;font:10.9px/14px 'Liberation Sans',sans-serif;color:#000;text-align:right">717</div>
<div style="position:absolute;left:78.5px;top:688.54px;width:80px;overflow:hidden;white-space:nowrap;font:10.9px/14px 'Liberation Sans',sans-serif;color:#000">Santo Domingo de los Tsáchilas</div>
<div style="position:absolute;left:162.5px;top:688.54px;width:80px;overflow:hidden;white-space:nowrap;font:10.9px/14px 'Liberation Sans',sans-serif;color:#000">Santo Domingo</div>
<div style="position:absolute;left:243.40px;top:688.54px;width:80.80px;white-space:nowrap;font:10.9px/14px 'Liberation Sans',sans-serif;color:#000;text-align:right">1768125670001</div>
<div style="position:absolute;left:330.80px;top:688.54px;white-space:nowrap;font:10.9px/14px 'Liberation Sans',sans-serif;color:#000">GAD Parroquial San Jacinto Del Bua</div>
<div style="position:absolute;left:38.00px;top:705.21px;width:34.00px;white-space:nowrap;font:10.9px/14px 'Liberation Sans',sans-serif;color:#000;text-align:right">718</div>
<div style="position:absolute;left:78.5px;top:705.21px;width:80px;overflow:hidden;white-space:nowrap;font:10.9px/14px 'Liberation Sans',sans-serif;color:#000">Santo Domingo de los Tsáchilas</div>
<div style="position:absolute;left:162.5px;top:705.21px;width:80px;overflow:hidden;white-space:nowrap;font:10.9px/14px 'Liberation Sans',sans-serif;color:#000">Santo Domingo</div>
<div style="position:absolute;left:243.40px;top:705.21px;width:80.80px;white-space:nowrap;font:10.9px/14px 'Liberation Sans',sans-serif;color:#000;text-align:right">1768114040001</div>
<div style="position:absolute;left:330.80px;top:705.21px;white-space:nowrap;font:10.9px/14px 'Liberation Sans',sans-serif;color:#000">GAD Parroquial Santa Maria del Toachi</div>
<div style="position:absolute;left:38.00px;top:721.88px;width:34.00px;white-space:nowrap;font:10.9px/14px 'Liberation Sans',sans-serif;color:#000;text-align:right">719</div>
<div style="position:absolute;left:78.5px;top:721.88px;width:80px;overflow:hidden;white-space:nowrap;font:10.9px/14px 'Liberation Sans',sans-serif;color:#000">Santo Domingo de los Tsáchilas</div>
<div style="position:absolute;left:162.5px;top:721.88px;width:80px;overflow:hidden;white-space:nowrap;font:10.9px/14px 'Liberation Sans',sans-serif;color:#000">Santo Domingo</div>
<div style="position:absolute;left:243.40px;top:721.88px;width:80.80px;white-space:nowrap;font:10.9px/14px 'Liberation Sans',sans-serif;color:#000;text-align:right">1768120600001</div>
<div style="position:absolute;left:330.80px;top:721.88px;white-space:nowrap;font:10.9px/14px 'Liberation Sans',sans-serif;color:#000">GAD Parroquial Valle Hermoso</div>
<div style="position:absolute;left:38.00px;top:738.55px;width:34.00px;white-space:nowrap;font:10.9px/14px 'Liberation Sans',sans-serif;color:#000;text-align:right">720</div>
<div style="position:absolute;left:78.5px;top:738.55px;width:80px;overflow:hidden;white-space:nowrap;font:10.9px/14px 'Liberation Sans',sans-serif;color:#000">Sucumbios</div>
<div style="position:absolute;left:162.5px;top:738.55px;width:80px;overflow:hidden;white-space:nowrap;font:10.9px/14px 'Liberation Sans',sans-serif;color:#000">Cascales</div>
<div style="position:absolute;left:243.40px;top:738.55px;width:80.80px;white-space:nowrap;font:10.9px/14px 'Liberation Sans',sans-serif;color:#000;text-align:right">2160071740001</div>
<div style="position:absolute;left:330.80px;top:738.55px;white-space:nowrap;font:10.9px/14px 'Liberation Sans',sans-serif;color:#000">GAD Parroquial Nueva Troncal ( Cab. en Nueva Troncal )</div>
<div style="position:absolute;left:38.00px;top:755.22px;width:34.00px;white-space:nowrap;font:10.9px/14px 'Liberation Sans',sans-serif;color:#000;text-align:right">721</div>
<div style="position:absolute;left:78.5px;top:755.22px;width:80px;overflow:hidden;white-space:nowrap;font:10.9px/14px 'Liberation Sans',sans-serif;color:#000">Sucumbios</div>
<div style="position:absolute;left:162.5px;top:755.22px;width:80px;overflow:hidden;white-space:nowrap;font:10.9px/14px 'Liberation Sans',sans-serif;color:#000">Cascales</div>
<div style="position:absolute;left:243.40px;top:755.22px;width:80.80px;white-space:nowrap;font:10.9px/14px 'Liberation Sans',sans-serif;color:#000;text-align:right">1768087560001</div>
<div style="position:absolute;left:330.80px;top:755.22px;white-space:nowrap;font:10.9px/14px 'Liberation Sans',sans-serif;color:#000">GAD Parroquial Santa Rosa de Sucumbios</div>
<div style="position:absolute;left:38.00px;top:771.89px;width:34.00px;white-space:nowrap;font:10.9px/14px 'Liberation Sans',sans-serif;color:#000;text-align:right">722</div>
<div style="position:absolute;left:78.5px;top:771.89px;width:80px;overflow:hidden;white-space:nowrap;font:10.9px/14px 'Liberation Sans',sans-serif;color:#000">Sucumbios</div>
<div style="position:absolute;left:162.5px;top:771.89px;width:80px;overflow:hidden;white-space:nowrap;font:10.9px/14px 'Liberation Sans',sans-serif;color:#000">Cascales</div>
<div style="position:absolute;left:243.40px;top:771.89px;width:80.80px;white-space:nowrap;font:10.9px/14px 'Liberation Sans',sans-serif;color:#000;text-align:right">1768087640001</div>
<div style="position:absolute;left:330.80px;top:771.89px;white-space:nowrap;font:10.9px/14px 'Liberation Sans',sans-serif;color:#000">GAD Parroquial Sevilla</div>
<div style="position:absolute;left:38.00px;top:788.56px;width:34.00px;white-space:nowrap;font:10.9px/14px 'Liberation Sans',sans-serif;color:#000;text-align:right">723</div>
<div style="position:absolute;left:78.5px;top:788.56px;width:80px;overflow:hidden;white-space:nowrap;font:10.9px/14px 'Liberation Sans',sans-serif;color:#000">Sucumbios</div>
<div style="position:absolute;left:162.5px;top:788.56px;width:80px;overflow:hidden;white-space:nowrap;font:10.9px/14px 'Liberation Sans',sans-serif;color:#000">Cuyabeno</div>
<div style="position:absolute;left:243.40px;top:788.56px;width:80.80px;white-space:nowrap;font:10.9px/14px 'Liberation Sans',sans-serif;color:#000;text-align:right">2160058210001</div>
<div style="position:absolute;left:330.80px;top:788.56px;white-space:nowrap;font:10.9px/14px 'Liberation Sans',sans-serif;color:#000">GAD Parroquial Aguas Negras</div>
<div style="position:absolute;left:38.00px;top:805.23px;width:34.00px;white-space:nowrap;font:10.9px/14px 'Liberation Sans',sans-serif;color:#000;text-align:right">724</div>
<div style="position:absolute;left:78.5px;top:805.23px;width:80px;overflow:hidden;white-space:nowrap;font:10.9px/14px 'Liberation Sans',sans-serif;color:#000">Sucumbios</div>
<div style="position:absolute;left:162.5px;top:805.23px;width:80px;overflow:hidden;white-space:nowrap;font:10.9px/14px 'Liberation Sans',sans-serif;color:#000">Cuyabeno</div>
<div style="position:absolute;left:243.40px;top:805.23px;width:80.80px;white-space:nowrap;font:10.9px/14px 'Liberation Sans',sans-serif;color:#000;text-align:right">1768100840001</div>
<div style="position:absolute;left:330.80px;top:805.23px;white-space:nowrap;font:10.9px/14px 'Liberation Sans',sans-serif;color:#000">GAD Parroquial Cuyabeno</div>
<div style="position:absolute;left:38.00px;top:821.90px;width:34.00px;white-space:nowrap;font:10.9px/14px 'Liberation Sans',sans-serif;color:#000;text-align:right">725</div>
<div style="position:absolute;left:78.5px;top:821.90px;width:80px;overflow:hidden;white-space:nowrap;font:10.9px/14px 'Liberation Sans',sans-serif;color:#000">Sucumbios</div>
<div style="position:absolute;left:162.5px;top:821.90px;width:80px;overflow:hidden;white-space:nowrap;font:10.9px/14px 'Liberation Sans',sans-serif;color:#000">Cuyabeno</div>
<div style="position:absolute;left:243.40px;top:821.90px;width:80.80px;white-space:nowrap;font:10.9px/14px 'Liberation Sans',sans-serif;color:#000;text-align:right">2160060880001</div>
<div style="position:absolute;left:330.80px;top:821.90px;white-space:nowrap;font:10.9px/14px 'Liberation Sans',sans-serif;color:#000">GAD Parroquial Pacayacu</div>
<svg style="position:absolute;left:37.50px;top:210.30px" width="38.00" height="17.70"><rect x="0.80" y="0.80" width="36.40" height="15.10" fill="none" stroke="#f4622e" stroke-width="1.6"/></svg>
<svg style="position:absolute;left:74.50px;top:227.00px" width="1526.00" height="21.50"><rect x="0.80" y="0.80" width="1524.40" height="18.90" fill="none" stroke="#f2b531" stroke-width="1.6"/></svg>
<svg style="position:absolute;left:74.50px;top:314.40px" width="594.30" height="17.60"><rect x="0.80" y="0.80" width="592.70" height="15.00" fill="none" stroke="#673ab7" stroke-width="1.6"/></svg>
<svg style="position:absolute;left:74.50px;top:347.60px" width="594.30" height="17.80"><rect x="0.80" y="0.80" width="592.70" height="15.20" fill="none" stroke="#e8703a" stroke-width="1.6"/></svg>
<svg style="position:absolute;left:327.10px;top:364.40px" width="341.70" height="17.60"><rect x="0.80" y="0.80" width="340.10" height="15.00" fill="none" stroke="#673ab7" stroke-width="1.6"/></svg>
<svg style="position:absolute;left:798.00px;top:364.40px" width="101.80" height="17.60"><rect x="0.80" y="0.80" width="100.20" height="15.00" fill="none" stroke="#f0b82e" stroke-width="1.6"/></svg>
<svg style="position:absolute;left:1002.00px;top:314.40px" width="93.00" height="17.60"><rect x="0.80" y="0.80" width="91.40" height="15.00" fill="none" stroke="#d0463c" stroke-width="1.6"/></svg>
<svg style="position:absolute;left:74.50px;top:484.50px" width="85.30" height="17.90"><rect x="0.80" y="0.80" width="83.70" height="15.30" fill="none" stroke="#e0403a" stroke-width="1.6"/></svg>
<svg style="position:absolute;left:667.80px;top:636.06px" width="131.20" height="17.67"><rect x="0.75" y="0.75" width="129.70" height="15.17" fill="none" stroke="#4a7fd6" stroke-width="1.5"/></svg>
<div style="position:absolute;left:0.00px;top:502.00px;width:1590.00px;height:3.00px;background:#c4c7c5"></div>
<div style="position:absolute;left:0.00px;top:190.30px;width:1590.00px;height:20.00px;background:#fff"></div>
<div style="position:absolute;left:0.00px;top:190.30px;width:1600.00px;height:1.00px;background:#c7c7c7"></div>
<div style="position:absolute;left:0.00px;top:210.00px;width:1590.00px;height:1.00px;background:#c7c7c7"></div>
<div style="position:absolute;left:0.00px;top:190.80px;width:34.20px;height:19.50px;background:#f8f9fa"></div>
<div style="position:absolute;left:34.20px;top:190.80px;width:3.60px;height:19.50px;background:#c4c7c5"></div>
<div style="position:absolute;left:327.60px;top:190.80px;width:340.70px;height:19.30px;background:#d3e3fd"></div>
<div style="position:absolute;left:74.50px;top:190.80px;width:1.00px;height:19.50px;background:#c7c7c7"></div>
<div style="position:absolute;left:158.80px;top:190.80px;width:1.00px;height:19.50px;background:#c7c7c7"></div>
<div style="position:absolute;left:242.90px;top:190.80px;width:1.00px;height:19.50px;background:#c7c7c7"></div>
<div style="position:absolute;left:327.10px;top:190.80px;width:1.00px;height:19.50px;background:#c7c7c7"></div>
<div style="position:absolute;left:667.80px;top:190.80px;width:1.00px;height:19.50px;background:#c7c7c7"></div>
<div style="position:absolute;left:798.00px;top:190.80px;width:1.00px;height:19.50px;background:#c7c7c7"></div>
<div style="position:absolute;left:898.80px;top:190.80px;width:1.00px;height:19.50px;background:#c7c7c7"></div>
<div style="position:absolute;left:1002.00px;top:190.80px;width:1.00px;height:19.50px;background:#c7c7c7"></div>
<div style="position:absolute;left:1094.00px;top:190.80px;width:1.00px;height:19.50px;background:#c7c7c7"></div>
<div style="position:absolute;left:1174.90px;top:190.80px;width:1.00px;height:19.50px;background:#c7c7c7"></div>
<div style="position:absolute;left:1237.40px;top:190.80px;width:1.00px;height:19.50px;background:#c7c7c7"></div>
<div style="position:absolute;left:1305.90px;top:190.80px;width:1.00px;height:19.50px;background:#c7c7c7"></div>
<div style="position:absolute;left:1389.90px;top:190.80px;width:1.00px;height:19.50px;background:#c7c7c7"></div>
<div style="position:absolute;left:1442.10px;top:190.80px;width:1.00px;height:19.50px;background:#c7c7c7"></div>
<div style="position:absolute;left:36.50px;top:194.50px;width:40.00px;white-space:nowrap;font:9.2px/13px 'Liberation Sans',sans-serif;color:#575a5c;text-align:center">A</div>
<div style="position:absolute;left:97.15px;top:194.50px;width:40.00px;white-space:nowrap;font:9.2px/13px 'Liberation Sans',sans-serif;color:#575a5c;text-align:center">B</div>
<div style="position:absolute;left:181.35px;top:194.50px;width:40.00px;white-space:nowrap;font:9.2px/13px 'Liberation Sans',sans-serif;color:#575a5c;text-align:center">C</div>
<div style="position:absolute;left:265.50px;top:194.50px;width:40.00px;white-space:nowrap;font:9.2px/13px 'Liberation Sans',sans-serif;color:#575a5c;text-align:center">D</div>
<div style="position:absolute;left:477.95px;top:194.50px;width:40.00px;white-space:nowrap;font:9.2px/13px 'Liberation Sans',sans-serif;color:#575a5c;text-align:center">E</div>
<div style="position:absolute;left:713.40px;top:194.50px;width:40.00px;white-space:nowrap;font:9.2px/13px 'Liberation Sans',sans-serif;color:#575a5c;text-align:center">F</div>
<div style="position:absolute;left:828.90px;top:194.50px;width:40.00px;white-space:nowrap;font:9.2px/13px 'Liberation Sans',sans-serif;color:#575a5c;text-align:center">G</div>
<div style="position:absolute;left:930.90px;top:194.50px;width:40.00px;white-space:nowrap;font:9.2px/13px 'Liberation Sans',sans-serif;color:#575a5c;text-align:center">H</div>
<div style="position:absolute;left:1028.50px;top:194.50px;width:40.00px;white-space:nowrap;font:9.2px/13px 'Liberation Sans',sans-serif;color:#575a5c;text-align:center">I</div>
<div style="position:absolute;left:1114.95px;top:194.50px;width:40.00px;white-space:nowrap;font:9.2px/13px 'Liberation Sans',sans-serif;color:#575a5c;text-align:center">J</div>
<div style="position:absolute;left:1186.65px;top:194.50px;width:40.00px;white-space:nowrap;font:9.2px/13px 'Liberation Sans',sans-serif;color:#575a5c;text-align:center">K</div>
<div style="position:absolute;left:1252.15px;top:194.50px;width:40.00px;white-space:nowrap;font:9.2px/13px 'Liberation Sans',sans-serif;color:#575a5c;text-align:center">L</div>
<div style="position:absolute;left:1328.40px;top:194.50px;width:40.00px;white-space:nowrap;font:9.2px/13px 'Liberation Sans',sans-serif;color:#575a5c;text-align:center">M</div>
<div style="position:absolute;left:1396.50px;top:194.50px;width:40.00px;white-space:nowrap;font:9.2px/13px 'Liberation Sans',sans-serif;color:#575a5c;text-align:center">N</div>
<div style="position:absolute;left:0.00px;top:210.30px;width:37.60px;height:614.40px;background:#fff"></div>
<div style="position:absolute;left:37.50px;top:210.30px;width:1.00px;height:614.40px;background:#c7c7c7"></div>
<div style="position:absolute;left:0.00px;top:226.50px;width:37.50px;height:1.00px;background:#e1e3e1"></div>
<div style="position:absolute;left:0.00px;top:212.15px;width:37.50px;white-space:nowrap;font:9.6px/13px 'Liberation Sans',sans-serif;color:#575a5c;text-align:center">1</div>
<div style="position:absolute;left:0.00px;top:247.00px;width:37.50px;height:1.00px;background:#e1e3e1"></div>
<div style="position:absolute;left:0.00px;top:230.75px;width:37.50px;white-space:nowrap;font:9.6px/13px 'Liberation Sans',sans-serif;color:#575a5c;text-align:center">2</div>
<div style="position:absolute;left:0.00px;top:263.90px;width:37.50px;height:1.00px;background:#e1e3e1"></div>
<div style="position:absolute;left:0.00px;top:249.45px;width:37.50px;white-space:nowrap;font:9.6px/13px 'Liberation Sans',sans-serif;color:#575a5c;text-align:center">3</div>
<div style="position:absolute;left:0.00px;top:280.90px;width:37.50px;height:1.00px;background:#e1e3e1"></div>
<div style="position:absolute;left:0.00px;top:266.40px;width:37.50px;white-space:nowrap;font:9.6px/13px 'Liberation Sans',sans-serif;color:#575a5c;text-align:center">4</div>
<div style="position:absolute;left:0.00px;top:297.30px;width:37.50px;height:1.00px;background:#e1e3e1"></div>
<div style="position:absolute;left:0.00px;top:283.10px;width:37.50px;white-space:nowrap;font:9.6px/13px 'Liberation Sans',sans-serif;color:#575a5c;text-align:center">5</div>
<div style="position:absolute;left:0.00px;top:313.90px;width:37.50px;height:1.00px;background:#e1e3e1"></div>
<div style="position:absolute;left:0.00px;top:299.60px;width:37.50px;white-space:nowrap;font:9.6px/13px 'Liberation Sans',sans-serif;color:#575a5c;text-align:center">6</div>
<div style="position:absolute;left:0.00px;top:330.50px;width:37.50px;height:1.00px;background:#e1e3e1"></div>
<div style="position:absolute;left:0.00px;top:316.20px;width:37.50px;white-space:nowrap;font:9.6px/13px 'Liberation Sans',sans-serif;color:#575a5c;text-align:center">7</div>
<div style="position:absolute;left:0.00px;top:347.10px;width:37.50px;height:1.00px;background:#e1e3e1"></div>
<div style="position:absolute;left:0.00px;top:332.80px;width:37.50px;white-space:nowrap;font:9.6px/13px 'Liberation Sans',sans-serif;color:#575a5c;text-align:center">8</div>
<div style="position:absolute;left:0.00px;top:363.90px;width:37.50px;height:1.00px;background:#e1e3e1"></div>
<div style="position:absolute;left:0.00px;top:349.50px;width:37.50px;white-space:nowrap;font:9.6px/13px 'Liberation Sans',sans-serif;color:#575a5c;text-align:center">9</div>
<div style="position:absolute;left:0.00px;top:380.50px;width:37.50px;height:1.00px;background:#e1e3e1"></div>
<div style="position:absolute;left:0.00px;top:366.20px;width:37.50px;white-space:nowrap;font:9.6px/13px 'Liberation Sans',sans-serif;color:#575a5c;text-align:center">10</div>
<div style="position:absolute;left:0.00px;top:397.10px;width:37.50px;height:1.00px;background:#e1e3e1"></div>
<div style="position:absolute;left:0.00px;top:382.80px;width:37.50px;white-space:nowrap;font:9.6px/13px 'Liberation Sans',sans-serif;color:#575a5c;text-align:center">11</div>
<div style="position:absolute;left:0.00px;top:413.90px;width:37.50px;height:1.00px;background:#e1e3e1"></div>
<div style="position:absolute;left:0.00px;top:399.50px;width:37.50px;white-space:nowrap;font:9.6px/13px 'Liberation Sans',sans-serif;color:#575a5c;text-align:center">12</div>
<div style="position:absolute;left:0.00px;top:430.90px;width:37.50px;height:1.00px;background:#e1e3e1"></div>
<div style="position:absolute;left:0.00px;top:416.40px;width:37.50px;white-space:nowrap;font:9.6px/13px 'Liberation Sans',sans-serif;color:#575a5c;text-align:center">13</div>
<div style="position:absolute;left:0.00px;top:484.00px;width:37.50px;height:1.00px;background:#e1e3e1"></div>
<div style="position:absolute;left:0.00px;top:451.45px;width:37.50px;white-space:nowrap;font:9.6px/13px 'Liberation Sans',sans-serif;color:#575a5c;text-align:center">14</div>
<div style="position:absolute;left:0.00px;top:500.90px;width:37.50px;height:1.00px;background:#e1e3e1"></div>
<div style="position:absolute;left:0.00px;top:486.45px;width:37.50px;white-space:nowrap;font:9.6px/13px 'Liberation Sans',sans-serif;color:#575a5c;text-align:center">15</div>
<div style="position:absolute;left:0.00px;top:518.87px;width:37.50px;height:1.00px;background:#e1e3e1"></div>
<div style="position:absolute;left:0.00px;top:504.53px;width:37.50px;white-space:nowrap;font:9.2px/13px 'Liberation Sans',sans-serif;color:#575a5c;text-align:center">720</div>
<div style="position:absolute;left:0.00px;top:535.54px;width:37.50px;height:1.00px;background:#e1e3e1"></div>
<div style="position:absolute;left:0.00px;top:521.20px;width:37.50px;white-space:nowrap;font:9.2px/13px 'Liberation Sans',sans-serif;color:#575a5c;text-align:center">721</div>
<div style="position:absolute;left:0.00px;top:552.21px;width:37.50px;height:1.00px;background:#e1e3e1"></div>
<div style="position:absolute;left:0.00px;top:537.88px;width:37.50px;white-space:nowrap;font:9.2px/13px 'Liberation Sans',sans-serif;color:#575a5c;text-align:center">722</div>
<div style="position:absolute;left:0.00px;top:568.88px;width:37.50px;height:1.00px;background:#e1e3e1"></div>
<div style="position:absolute;left:0.00px;top:554.54px;width:37.50px;white-space:nowrap;font:9.2px/13px 'Liberation Sans',sans-serif;color:#575a5c;text-align:center">723</div>
<div style="position:absolute;left:0.00px;top:585.55px;width:37.50px;height:1.00px;background:#e1e3e1"></div>
<div style="position:absolute;left:0.00px;top:571.21px;width:37.50px;white-space:nowrap;font:9.2px/13px 'Liberation Sans',sans-serif;color:#575a5c;text-align:center">724</div>
<div style="position:absolute;left:0.00px;top:602.22px;width:37.50px;height:1.00px;background:#e1e3e1"></div>
<div style="position:absolute;left:0.00px;top:587.88px;width:37.50px;white-space:nowrap;font:9.2px/13px 'Liberation Sans',sans-serif;color:#575a5c;text-align:center">725</div>
<div style="position:absolute;left:0.00px;top:618.89px;width:37.50px;height:1.00px;background:#e1e3e1"></div>
<div style="position:absolute;left:0.00px;top:604.55px;width:37.50px;white-space:nowrap;font:9.2px/13px 'Liberation Sans',sans-serif;color:#575a5c;text-align:center">726</div>
<div style="position:absolute;left:0.00px;top:635.56px;width:37.50px;height:1.00px;background:#e1e3e1"></div>
<div style="position:absolute;left:0.00px;top:621.22px;width:37.50px;white-space:nowrap;font:9.2px/13px 'Liberation Sans',sans-serif;color:#575a5c;text-align:center">727</div>
<div style="position:absolute;left:0.00px;top:652.23px;width:37.50px;height:1.00px;background:#e1e3e1"></div>
<div style="position:absolute;left:0.00px;top:637.89px;width:37.50px;white-space:nowrap;font:9.2px/13px 'Liberation Sans',sans-serif;color:#575a5c;text-align:center">728</div>
<div style="position:absolute;left:0.00px;top:668.90px;width:37.50px;height:1.00px;background:#e1e3e1"></div>
<div style="position:absolute;left:0.00px;top:654.56px;width:37.50px;white-space:nowrap;font:9.2px/13px 'Liberation Sans',sans-serif;color:#575a5c;text-align:center">729</div>
<div style="position:absolute;left:0.00px;top:685.57px;width:37.50px;height:1.00px;background:#e1e3e1"></div>
<div style="position:absolute;left:0.00px;top:671.23px;width:37.50px;white-space:nowrap;font:9.2px/13px 'Liberation Sans',sans-serif;color:#575a5c;text-align:center">730</div>
<div style="position:absolute;left:0.00px;top:702.24px;width:37.50px;height:1.00px;background:#e1e3e1"></div>
<div style="position:absolute;left:0.00px;top:687.90px;width:37.50px;white-space:nowrap;font:9.2px/13px 'Liberation Sans',sans-serif;color:#575a5c;text-align:center">731</div>
<div style="position:absolute;left:0.00px;top:718.91px;width:37.50px;height:1.00px;background:#e1e3e1"></div>
<div style="position:absolute;left:0.00px;top:704.57px;width:37.50px;white-space:nowrap;font:9.2px/13px 'Liberation Sans',sans-serif;color:#575a5c;text-align:center">732</div>
<div style="position:absolute;left:0.00px;top:735.58px;width:37.50px;height:1.00px;background:#e1e3e1"></div>
<div style="position:absolute;left:0.00px;top:721.24px;width:37.50px;white-space:nowrap;font:9.2px/13px 'Liberation Sans',sans-serif;color:#575a5c;text-align:center">733</div>
<div style="position:absolute;left:0.00px;top:752.25px;width:37.50px;height:1.00px;background:#e1e3e1"></div>
<div style="position:absolute;left:0.00px;top:737.91px;width:37.50px;white-space:nowrap;font:9.2px/13px 'Liberation Sans',sans-serif;color:#575a5c;text-align:center">734</div>
<div style="position:absolute;left:0.00px;top:768.92px;width:37.50px;height:1.00px;background:#e1e3e1"></div>
<div style="position:absolute;left:0.00px;top:754.58px;width:37.50px;white-space:nowrap;font:9.2px/13px 'Liberation Sans',sans-serif;color:#575a5c;text-align:center">735</div>
<div style="position:absolute;left:0.00px;top:785.59px;width:37.50px;height:1.00px;background:#e1e3e1"></div>
<div style="position:absolute;left:0.00px;top:771.25px;width:37.50px;white-space:nowrap;font:9.2px/13px 'Liberation Sans',sans-serif;color:#575a5c;text-align:center">736</div>
<div style="position:absolute;left:0.00px;top:802.26px;width:37.50px;height:1.00px;background:#e1e3e1"></div>
<div style="position:absolute;left:0.00px;top:787.92px;width:37.50px;white-space:nowrap;font:9.2px/13px 'Liberation Sans',sans-serif;color:#575a5c;text-align:center">737</div>
<div style="position:absolute;left:0.00px;top:818.93px;width:37.50px;height:1.00px;background:#e1e3e1"></div>
<div style="position:absolute;left:0.00px;top:804.59px;width:37.50px;white-space:nowrap;font:9.2px/13px 'Liberation Sans',sans-serif;color:#575a5c;text-align:center">738</div>
<div style="position:absolute;left:0.00px;top:502.00px;width:37.50px;height:3.00px;background:#c4c7c5"></div>
<div style="position:absolute;left:1590.00px;top:190.30px;width:10.00px;height:313.00px;background:#f8f9fa"></div>
<div style="position:absolute;left:1590.00px;top:503.00px;width:10.00px;height:322.00px;background:#fff"></div>
<div style="position:absolute;left:1590.00px;top:190.30px;width:1.00px;height:634.40px;background:#dadce0"></div>
<div style="position:absolute;left:1592.00px;top:669.00px;width:7.00px;height:21.50px;background:#dadce0;border-radius:4px"></div>
<div style="position:absolute;left:1591.00px;top:499.00px;width:9.00px;height:3.50px;background:#dadce0"></div>
<div style="position:absolute;left:0;top:824.7px;width:1600px;height:10.3px;background:#fff"></div>
<div style="position:absolute;left:0;top:824.7px;width:37.5px;height:10.3px;background:#f8f9fa"></div>
<div style="position:absolute;left:37.5px;top:824.7px;width:1px;height:10.3px;background:#e1e3e1"></div>
<div style="position:absolute;left:38px;top:824.7px;width:1552px;height:1px;background:#e1e3e1"></div>
<div style="position:absolute;left:42px;top:826.5px;width:685px;height:7px;border-radius:4px;background:#dadce0"></div>
<svg style="position:absolute;left:1564px;top:827px" width="24" height="6"><path d="M4 0 L1 3 L4 6 Z M20 0 L23 3 L20 6 Z" fill="#9aa0a6"/></svg>
<svg style="position:absolute;left:1591px;top:804px" width="8" height="20"><path d="M1 6 L4 3 L7 6 Z M1 14 L4 17 L7 14 Z" fill="#9aa0a6"/></svg>
<div style="position:absolute;left:0;top:835px;width:1600px;height:32px;background:#f9fbfd;border-top:1px solid #e8eaed;box-sizing:border-box"></div>
<svg style="position:absolute;left:45px;top:846px" width="12" height="12"><path d="M6 0.5 V11.5 M0.5 6 H11.5" stroke="#444746" stroke-width="1.5"/></svg>
<svg style="position:absolute;left:78px;top:846.5px" width="13" height="11"><path d="M0 1 H13 M0 5.5 H13 M0 10 H13" stroke="#444746" stroke-width="1.5"/></svg>
<div style="position:absolute;left:112px;top:836px;width:181px;height:31px;background:#e1e9f7"></div>
<div style="position:absolute;left:121.5px;top:845px;font:bold 11.9px/15px 'Liberation Sans',sans-serif;color:#0b57d0;white-space:nowrap">REMUNERACIONES GAD</div>
<svg style="position:absolute;left:275px;top:850px" width="8" height="4"><path d="M0 0 H8 L4 4 Z" fill="#0b57d0"/></svg>
<div style="position:absolute;left:302.3px;top:845px;font:11.6px/15px 'Liberation Sans',sans-serif;color:#444746;white-space:nowrap">VALORES</div>
<svg style="position:absolute;left:365.4px;top:850px" width="8" height="4"><path d="M0 0 H8 L4 4 Z" fill="#444746"/></svg>
<div style="position:absolute;left:393.2px;top:845px;font:11.6px/15px 'Liberation Sans',sans-serif;color:#444746;white-space:nowrap">JUNTAS Y GADS</div>
<svg style="position:absolute;left:495px;top:850px" width="8" height="4"><path d="M0 0 H8 L4 4 Z" fill="#444746"/></svg>
<div style="position:absolute;left:523.6px;top:845px;font:11.6px/15px 'Liberation Sans',sans-serif;color:#444746;white-space:nowrap">SEDES</div>
<svg style="position:absolute;left:570.7px;top:850px" width="8" height="4"><path d="M0 0 H8 L4 4 Z" fill="#444746"/></svg>
<svg style="position:absolute;left:1572px;top:846px" width="8" height="12"><path d="M6.5 1 L1.5 6 L6.5 11" stroke="#444746" stroke-width="1.6" fill="none"/></svg>
<div style="position:absolute;left:0;top:867px;width:1600px;height:33px;background:linear-gradient(90deg,#1f2d33 0%,#22383f 28%,#21323f 58%,#1c2847 87%,#1b2748 100%)"></div>
<svg style="position:absolute;left:12px;top:876px" width="16" height="16" viewBox="0 0 16 16"><path d="M0 2.2 L6.5 1.3 V7.4 H0 Z M7.4 1.2 L16 0 V7.4 H7.4 Z M0 8.3 H6.5 V14.6 L0 13.7 Z M7.4 8.3 H16 V16 L7.4 14.8 Z" fill="#fff"/></svg>
<svg style="position:absolute;left:50px;top:873px" width="20" height="21" viewBox="0 0 20 21"><circle cx="11.5" cy="8.5" r="6.3" fill="none" stroke="#fff" stroke-width="1.8"/><path d="M7 13 L1.5 19" stroke="#fff" stroke-width="2"/></svg>
<div style="position:absolute;left:95px;top:873px;width:15px;height:20px;background:#7a8a96;border-radius:1px"></div><div style="position:absolute;left:97px;top:875px;width:11px;height:4px;background:#6ec6e8"></div>
<svg style="position:absolute;left:97px;top:881px" width="11" height="11"><path d="M0 0 H3 V3 H0 Z M4 0 H7 V3 H4 Z M8 0 H11 V3 H8 Z M0 4 H3 V7 H0 Z M4 4 H7 V7 H4 Z M0 8 H3 V11 H0 Z M4 8 H7 V11 H4 Z" fill="#e8eef2"/><path d="M8 4 H11 V11 H8 Z" fill="#1d4fa0"/></svg>
<div style="position:absolute;left:134px;top:873px;width:18px;height:19px;background:#c4161c;border-radius:3px"></div>
<svg style="position:absolute;left:136px;top:875px" width="14" height="14" viewBox="0 0 14 14"><path d="M7 1 Q5.5 1 6.5 5 Q5 9 2 11 Q1 12 2.5 12 Q5 11 7 8 Q10 7.5 12 8.5 Q13 8 11 7 Q8 6.5 6.5 5" fill="none" stroke="#fff" stroke-width="1.5"/></svg>
<div style="position:absolute;left:164px;top:867px;width:40px;height:33px;background:#3b4a52"></div>
<div style="position:absolute;left:166px;top:898px;width:36px;height:2px;background:#8cb4d9"></div>
<svg style="position:absolute;left:174px;top:873px" width="24" height="22" viewBox="0 0 24 22"><circle cx="10" cy="10" r="9" fill="#2e9e4f"/><path d="M10 10 L18.6 6.5 A9 9 0 0 0 2.2 5.5 Z" fill="#db4437"/><path d="M10 10 L18.6 6.5 A9 9 0 0 1 9 19 Z" fill="#f4c20d"/><circle cx="10" cy="10" r="4.2" fill="#fff"/><circle cx="10" cy="10" r="3.2" fill="#4285f4"/><circle cx="17" cy="15" r="5.5" fill="#e8501f"/><text x="17" y="18" font-size="7" font-family="Liberation Sans" fill="#fff" text-anchor="middle">J</text></svg>
<svg style="position:absolute;left:215px;top:875px" width="19" height="16" viewBox="0 0 19 16"><path d="M0 1 H7 L8.5 3 H19 V16 H0 Z" fill="#f2c84b"/><path d="M0 5 H19 V16 H0 Z" fill="#ffd964"/><rect x="5" y="9" width="9" height="5" fill="#2d8fd5"/></svg>
<div style="position:absolute;left:208px;top:898px;width:34px;height:2px;background:#8cb4d9"></div>
<svg style="position:absolute;left:255px;top:872px" width="21" height="21" viewBox="0 0 21 21"><circle cx="10.5" cy="11" r="9.5" fill="#ff7139"/><path d="M3 6 Q6 1 12 2 Q18 3 19.5 9 Q17 5 13 5.5 Z" fill="#ffbd4f"/><circle cx="10.5" cy="11.5" r="5" fill="#9059ff"/><path d="M5 10 Q7 15 12 15 Q15 15 16 12" fill="#ff4f5e"/></svg>
<div style="position:absolute;left:296px;top:873px;width:20px;height:20px;background:#0a0a0a;border-radius:4px"></div>
<svg style="position:absolute;left:297px;top:877px" width="18" height="12" viewBox="0 0 18 12"><path d="M1 2 Q2 11 5 10 Q7 9 9 3 Q11 9 13 10 Q16 11 17 2" fill="none" stroke="#00bceb" stroke-width="2.6"/></svg>
<div style="position:absolute;left:290px;top:898px;width:34px;height:2px;background:#8cb4d9"></div>
<div style="position:absolute;left:344px;top:874px;width:13px;height:17px;background:#fff;border:1px solid #a5b7d6"></div>
<div style="position:absolute;left:337px;top:876px;width:13px;height:13px;background:#2b579a"></div>
<div style="position:absolute;left:338px;top:876px;font:bold 9px/13px 'Liberation Sans',sans-serif;color:#fff">W</div>
<div style="position:absolute;left:331px;top:898px;width:34px;height:2px;background:#8cb4d9"></div>
<svg style="position:absolute;left:1446px;top:878px" width="12" height="8"><path d="M1 7 L6 2 L11 7" stroke="#fff" stroke-width="1.2" fill="none"/></svg>
<svg style="position:absolute;left:1465px;top:876px" width="14" height="14" viewBox="0 0 14 14"><rect x="3" y="2" width="10.5" height="7.5" fill="none" stroke="#fff" stroke-width="1"/><path d="M6 12.5 H10 M8 9.5 V12.5 M0.5 1.5 H3 M0.5 4 H3 M1.5 1.5 V12" stroke="#fff" stroke-width="1"/></svg>
<svg style="position:absolute;left:1487px;top:875px" width="12" height="16" viewBox="0 0 12 16"><path d="M2 2 Q6 0 10 2 M2 14 Q6 16 10 14" stroke="#fff" stroke-width="1" fill="none"/><rect x="1" y="5" width="7" height="6" rx="1.5" fill="none" stroke="#fff" stroke-width="1"/><path d="M9 6.5 L11.5 5 V11 L9 9.5" fill="none" stroke="#fff" stroke-width="1"/></svg>
<div style="position:absolute;left:1502px;top:870px;width:55px;text-align:center;font:10px/13px 'Liberation Sans',sans-serif;color:#fff">10:50</div>
<div style="position:absolute;left:1502px;top:884px;width:55px;text-align:center;font:10px/13px 'Liberation Sans',sans-serif;color:#fff">4/6/2024</div>
<svg style="position:absolute;left:1566px;top:876px" width="14" height="14" viewBox="0 0 14 14"><path d="M0.5 0.5 H13.5 V10.5 H9 L7 12.8 L5 10.5 H0.5 Z" fill="none" stroke="#fff" stroke-width="1"/></svg>
<div style="position:absolute;left:1596px;top:867px;width:1px;height:33px;background:#5a6878"></div>
<div style="position:absolute;left:1298.4px;top:117.8px;width:291.6px;height:177.8px;background:#fff;border-radius:8px;box-shadow:0 1px 3px rgba(0,0,0,.25),0 4px 8px 3px rgba(0,0,0,.12)"></div>
<div style="position:absolute;left:1319.5px;top:139.5px;font:17.5px/22px 'Liberation Sans',sans-serif;color:#1f1f1f;white-space:nowrap;letter-spacing:0.7px">Accediste como</div>
<div style="position:absolute;left:1319.5px;top:163px;font:17.5px/22px 'Liberation Sans',sans-serif;color:#1f1f1f;white-space:nowrap;letter-spacing:0.87px;-webkit-text-stroke:0.25px #1f1f1f">juanbetancour4@gmail.com</div>
<div style="position:absolute;left:1318.9px;top:198.3px;width:26.6px;height:26.6px;border-radius:50%;background:#e8501f;color:#fff;font:14px/26.6px 'Liberation Sans',sans-serif;text-align:center">J</div>
<div style="position:absolute;left:1352.9px;top:205px;font:12.3px/15px 'Liberation Sans',sans-serif;color:#3c4043;white-space:nowrap">Juan Betancour</div>
<div style="position:absolute;left:1341px;top:245px;width:131px;height:29.4px;box-sizing:border-box;border:1px solid #dadce0;border-radius:4px;color:#188038;font:bold 11.9px/27.4px 'Liberation Sans',sans-serif;text-align:center">Cambiar cuenta</div>
<div style="position:absolute;left:1482.4px;top:245px;width:86.5px;height:29.4px;background:#188038;border-radius:4px;color:#fff;font:bold 11.9px/29.4px 'Liberation Sans',sans-serif;text-align:center">Aceptar</div>
</body></html>
